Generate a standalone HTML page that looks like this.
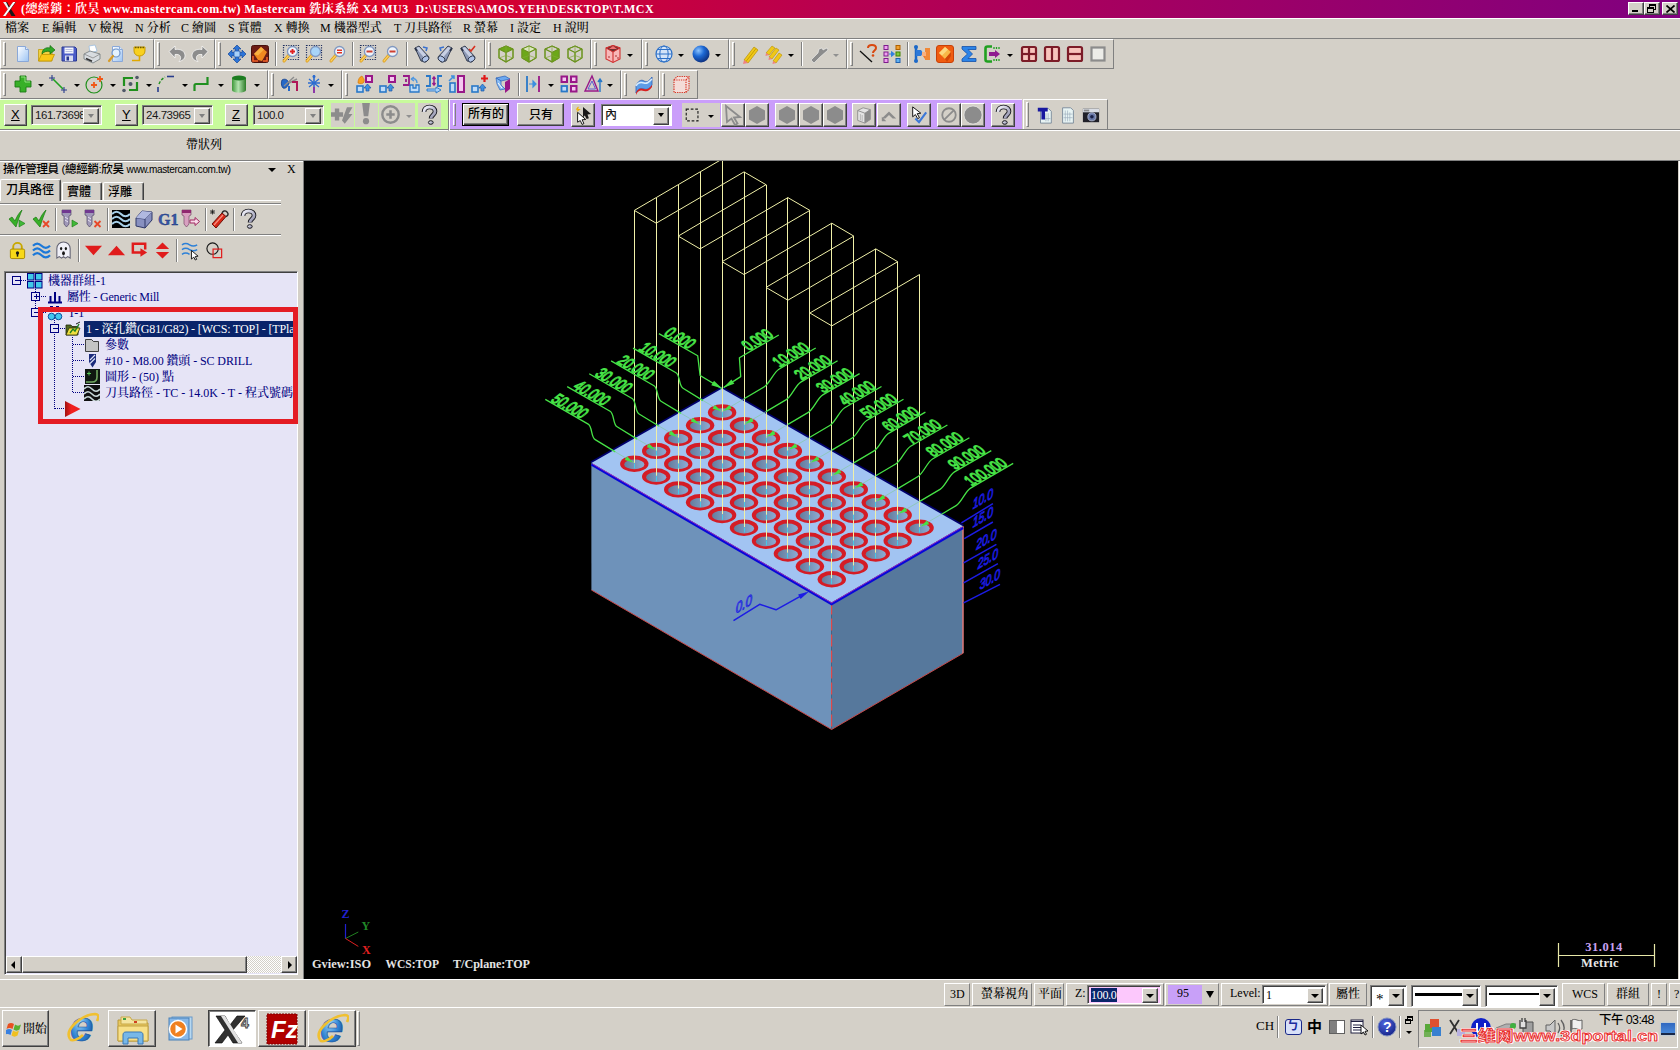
<!DOCTYPE html>
<html lang="zh-Hant">
<head>
<meta charset="utf-8">
<title>Mastercam X4 MU3</title>
<style>
*{box-sizing:border-box;margin:0;padding:0}
html,body{width:1680px;height:1050px;overflow:hidden;background:#d4d0c8}
body{position:relative;font-weight:500;font-family:"Liberation Serif","Noto Serif CJK SC",serif;font-size:12px;color:#000}
.abs{position:absolute}
.t{position:absolute;white-space:nowrap;line-height:1}
.sans{font-family:"Liberation Sans","Noto Sans CJK TC",sans-serif}
#title{left:0;top:0;width:1680px;height:18px;background:linear-gradient(90deg,#fa0006 0%,#e6001c 16%,#b80050 50%,#800080 100%)}
#title .t{color:#fff;font-weight:bold;font-size:12px;top:3px;letter-spacing:.42px}
.cap{position:absolute;top:2px;width:16px;height:13px;background:#d4d0c8;border:1px solid;border-color:#fff #404040 #404040 #fff;box-shadow:inset -1px -1px 0 #808080}
#menu .t{top:22px;font-size:12px}
.grp{position:absolute;border:1px solid;border-color:#fff #808080 #808080 #fff}
.grip{position:absolute;width:3px;border:1px solid;border-color:#fff #808080 #808080 #fff}
.sep{position:absolute;width:2px;border-left:1px solid #808080;border-right:1px solid #fff}
.dd{position:absolute;width:0;height:0;border-left:3px solid transparent;border-right:3px solid transparent;border-top:3px solid #000}
.btn{position:absolute;background:#d4d0c8;border:1px solid;border-color:#fff #404040 #404040 #fff;box-shadow:inset -1px -1px 0 #808080}
.sunk{position:absolute;border:1px solid;border-color:#808080 #fff #fff #808080;box-shadow:inset 1px 1px 0 #404040}
.ic{position:absolute;width:20px;height:20px;overflow:visible}
</style>
</head>
<body>
<div id="title" class="abs">
<svg class="abs" style="left:2px;top:1px" width="15" height="16" viewBox="0 0 15 16"><path d="M1 1h4l2.500 4.500L11 1h3L9 8l4.500 7h-4L7 10.500 3.500 15H1l5-7z" fill="#181818"/><path d="M1 15L11 1h2.500L3.500 15z" fill="#fff"/><path d="M1 1h3l3 6-1 1.500z" fill="#f0f0f0"/></svg>
<span class="t" id="tt" style="left:21px">(總經銷：欣昊 www.mastercam.com.tw) Mastercam 銑床系統 X4 MU3&nbsp; D:\USERS\AMOS.YEH\DESKTOP\T.MCX</span>
<div class="cap" style="left:1628px"><div class="abs" style="left:3px;top:7px;width:6px;height:2px;background:#000"></div></div>
<div class="cap" style="left:1644px"><div class="abs" style="left:4px;top:1px;width:7px;height:6px;border:1px solid #000;border-top-width:2px"></div><div class="abs" style="left:2px;top:4px;width:7px;height:6px;border:1px solid #000;border-top-width:2px;background:#d4d0c8"></div></div>
<div class="cap" style="left:1662px"><svg class="abs" style="left:3px;top:1.5px" width="9" height="8" viewBox="0 0 9 8"><path d="M.5.5l8 7M8.500.5l-8 7" stroke="#000" stroke-width="1.7"/></svg></div>
</div>
<div class="abs" style="left:0;top:18px;width:1680px;height:1px;background:#fff"></div>
<div id="menu">
<span class="t" style="left:5px">檔案</span>
<span class="t" style="left:42px">E 編輯</span>
<span class="t" style="left:88px">V 檢視</span>
<span class="t" style="left:135px">N 分析</span>
<span class="t" style="left:181px">C 繪圖</span>
<span class="t" style="left:228px">S 實體</span>
<span class="t" style="left:274px">X 轉換</span>
<span class="t" style="left:320px">M 機器型式</span>
<span class="t" style="left:394px">T 刀具路徑</span>
<span class="t" style="left:463px">R 螢幕</span>
<span class="t" style="left:510px">I 設定</span>
<span class="t" style="left:553px">H 說明</span>
</div>
<div class="abs" style="left:0;top:38px;width:1680px;height:1px;background:#808080"></div>
<div class="grp" style="left:0px;top:39px;width:154px;height:30px"></div>
<div class="grip" style="left:3px;top:42px;height:24px"></div>
<div class="grp" style="left:154px;top:39px;width:61px;height:30px"></div>
<div class="grip" style="left:157px;top:42px;height:24px"></div>
<div class="grp" style="left:215px;top:39px;width:270px;height:30px"></div>
<div class="grip" style="left:218px;top:42px;height:24px"></div>
<div class="grp" style="left:485px;top:39px;width:106px;height:30px"></div>
<div class="grip" style="left:488px;top:42px;height:24px"></div>
<div class="grp" style="left:591px;top:39px;width:51px;height:30px"></div>
<div class="grip" style="left:594px;top:42px;height:24px"></div>
<div class="grp" style="left:642px;top:39px;width:87px;height:30px"></div>
<div class="grip" style="left:645px;top:42px;height:24px"></div>
<div class="grp" style="left:729px;top:39px;width:118px;height:30px"></div>
<div class="grip" style="left:732px;top:42px;height:24px"></div>
<div class="grp" style="left:847px;top:39px;width:267px;height:30px"></div>
<div class="grip" style="left:850px;top:42px;height:24px"></div>
<svg class="ic" style="left:13px;top:43.5px;width:20px;height:20px" viewBox="0 0 20 20"><defs><linearGradient id="gpage" x1="0" y1="0" x2="1" y2="1"><stop offset="0" stop-color="#fff"/><stop offset="1" stop-color="#9cc4f4"/></linearGradient></defs><path d="M4.500 2.500h8l3 3v12h-11z" fill="url(#gpage)" stroke="#8aa8d8"/><path d="M12.500 2.500v3h3" fill="#dbe9fb" stroke="#8aa8d8"/></svg>
<svg class="ic" style="left:36px;top:43.5px;width:20px;height:20px" viewBox="0 0 20 20"><path d="M2.500 5.500h6l1.500 1.500H16V17H2.500z" fill="#f0d040" stroke="#c09c10" stroke-width=".8"/><path d="M2.500 17l3-6.500h13L15.500 17z" fill="#f8c818" stroke="#c09400" stroke-width=".8"/><path d="M6 10c0-5 4-7 8-6V1.500L19 6l-5 4V7.500c-3-.7-6 0-8 2.500z" fill="#30a828" stroke="#146c10" stroke-width=".7"/></svg>
<svg class="ic" style="left:59px;top:43.5px;width:20px;height:20px" viewBox="0 0 20 20"><path d="M3 3h13l1.500 1.500V17H3z" fill="#4c5cc8" stroke="#283890"/><rect x="5.500" y="3.500" width="9" height="6" fill="#f4f6fc"/><path d="M6.500 5.500h7M6.500 7.500h7" stroke="#a8b0d8" stroke-width=".8"/><rect x="6" y="11.500" width="8" height="5.500" fill="#d8dcf0"/><rect x="7.500" y="12.500" width="2.500" height="4" fill="#283890"/></svg>
<svg class="ic" style="left:82px;top:43.5px;width:20px;height:20px" viewBox="0 0 20 20"><path d="M7 2l6-1 2 6-7 2z" fill="#fff" stroke="#90b8e0" stroke-width=".7"/><path d="M2 10l6-3 10 3v5l-7 4-9-4z" fill="#d8dce0" stroke="#70787c" stroke-width=".8"/><path d="M2 10l9 4 7-4" fill="none" stroke="#888" stroke-width=".8"/><path d="M4 14.500l6 2.700" stroke="#333" stroke-width="1.600"/></svg>
<svg class="ic" style="left:106px;top:43.5px;width:20px;height:20px" viewBox="0 0 20 20"><path d="M6.500 2.500h7l3 3v12h-10z" fill="url(#gpage)" stroke="#8aa8d8"/><path d="M13.500 2.500v3h3" fill="#dbe9fb" stroke="#8aa8d8"/><circle cx="10" cy="9" r="4" fill="#e4f2ff" stroke="#6c94cc" stroke-width="1.200"/><path d="M7 12l-4 5" stroke="#d89c28" stroke-width="2.200" stroke-linecap="round"/></svg>
<svg class="ic" style="left:129px;top:43.5px;width:20px;height:20px" viewBox="0 0 20 20"><path d="M5 3h11v4c0 3-2.500 5-5.500 5S5 10 5 7z" fill="#f8d020" stroke="#c09400" stroke-width=".9"/><path d="M6 3.500h9" stroke="#6c5800" stroke-width="1.400" stroke-dasharray="1.500 1"/><path d="M10.500 12v4.500H3" fill="none" stroke="#e0a800" stroke-width="1.600"/></svg>
<svg class="ic" style="left:167px;top:43.5px;width:20px;height:20px" viewBox="0 0 20 20"><path d="M2 7.500L8 2v3.500c6-1 10 2 10 6 0 3-2 5-6 6 3-3 2-8-4-7V14z" fill="#8c8c8c" stroke="#fff" stroke-width=".7"/></svg>
<svg class="ic" style="left:190px;top:43.5px;width:20px;height:20px" viewBox="0 0 20 20"><path d="M18 7.500L12 2v3.500c-6-1-10 2-10 6 0 3 2 5 6 6-3-3-2-8 4-7V14z" fill="#8c8c8c" stroke="#fff" stroke-width=".7"/></svg>
<svg class="ic" style="left:227px;top:43.5px;width:20px;height:20px" viewBox="0 0 20 20"><path d="M10 1l4 4h-2.500v3.500H15V6l4 4-4 4v-2.500h-3.500V15H14l-4 4-4-4h2.500v-3.500H5V14l-4-4 4-4v2.500h3.500V5H6z" fill="#2c74d8" stroke="#144898" stroke-width=".7"/><rect x="7" y="7" width="6" height="6" fill="#a8d0f8" stroke="#2058b0" stroke-width=".8"/></svg>
<svg class="ic" style="left:250px;top:43.5px;width:20px;height:20px" viewBox="0 0 20 20"><rect x="1.500" y="1.500" width="17" height="17" rx="2" fill="#6c1c14" stroke="#48100c"/><path d="M4 10l7-7 6 5-5 9-4-1z" fill="#f08820"/><path d="M4 10l7-7 3 2.500-6 6z" fill="#f8b040"/><path d="M3 12v5h5M17 13v4h-4" fill="none" stroke="#f06028" stroke-width="1.600"/></svg>
<svg class="ic" style="left:281px;top:43.5px;width:20px;height:20px" viewBox="0 0 20 20"><rect x="2.500" y="1.500" width="15" height="14" fill="none" stroke="#203060" stroke-width="1.200" stroke-dasharray="1.200 1.200"/><path d="M8 11l-5 6" stroke="#e0a020" stroke-width="3" stroke-linecap="round"/><path d="M8 11l-5 6" stroke="#f8d060" stroke-width="1.200" stroke-linecap="round"/><circle cx="11.500" cy="7.500" r="5" fill="#eef4fc" stroke="#8098c0" stroke-width="1.300"/><path d="M9 7.500h5M11.500 5v5" stroke="#e02020" stroke-width="1.800"/></svg>
<svg class="ic" style="left:304px;top:43.5px;width:20px;height:20px" viewBox="0 0 20 20"><rect x="2.500" y="1.500" width="15" height="14" fill="none" stroke="#203060" stroke-width="1.200" stroke-dasharray="1.200 1.200"/><path d="M8 11l-5 6" stroke="#e0a020" stroke-width="3" stroke-linecap="round"/><path d="M8 11l-5 6" stroke="#f8d060" stroke-width="1.200" stroke-linecap="round"/><circle cx="11.500" cy="7.500" r="5" fill="#a8d4f8" stroke="#8098c0" stroke-width="1.300"/></svg>
<svg class="ic" style="left:328px;top:43.5px;width:20px;height:20px" viewBox="0 0 20 20"><path d="M8 11l-5 6" stroke="#e0a020" stroke-width="3" stroke-linecap="round"/><path d="M8 11l-5 6" stroke="#f8d060" stroke-width="1.200" stroke-linecap="round"/><circle cx="11.500" cy="7.500" r="5" fill="#eef4fc" stroke="#8098c0" stroke-width="1.300"/><path d="M9 6.300h5M9 8.800h5" stroke="#e03020" stroke-width="1.500"/></svg>
<svg class="ic" style="left:358px;top:43.5px;width:20px;height:20px" viewBox="0 0 20 20"><rect x="2.500" y="1.500" width="15" height="14" fill="none" stroke="#203060" stroke-width="1.200" stroke-dasharray="1.200 1.200"/><path d="M8 11l-5 6" stroke="#e0a020" stroke-width="3" stroke-linecap="round"/><path d="M8 11l-5 6" stroke="#f8d060" stroke-width="1.200" stroke-linecap="round"/><circle cx="11.500" cy="7.500" r="5" fill="#eef4fc" stroke="#8098c0" stroke-width="1.300"/><path d="M8.500 7.500h6" stroke="#d04030" stroke-width="2"/></svg>
<svg class="ic" style="left:381px;top:43.5px;width:20px;height:20px" viewBox="0 0 20 20"><path d="M8 11l-5 6" stroke="#e0a020" stroke-width="3" stroke-linecap="round"/><path d="M8 11l-5 6" stroke="#f8d060" stroke-width="1.200" stroke-linecap="round"/><circle cx="11.500" cy="7.500" r="5" fill="#eef4fc" stroke="#8098c0" stroke-width="1.300"/><path d="M8.500 7.500h6" stroke="#d04030" stroke-width="2"/></svg>
<svg class="ic" style="left:412px;top:43.5px;width:20px;height:20px" viewBox="0 0 20 20"><g><path d="M3 4l4-2 10 11-3 5-5-1z" fill="#8c98b4" stroke="#2c3448" stroke-width=".9"/><path d="M4 4l3-1 9 10-2 3z" fill="#c8d0e4"/><ellipse cx="13.500" cy="15" rx="3.800" ry="2.600" transform="rotate(-35 13.500 15)" fill="#b0c4e8" stroke="#2c3448" stroke-width=".9"/><path d="M3 4l2 3" stroke="#2c3448" stroke-width="2"/></g><path d="M11 3l4 1-1 3" fill="none" stroke="#3870d0" stroke-width="1.500"/></svg>
<svg class="ic" style="left:435px;top:43.5px;width:20px;height:20px" viewBox="0 0 20 20"><g transform="translate(20 0) scale(-1 1)"><path d="M3 4l4-2 10 11-3 5-5-1z" fill="#8c98b4" stroke="#2c3448" stroke-width=".9"/><path d="M4 4l3-1 9 10-2 3z" fill="#c8d0e4"/><ellipse cx="13.500" cy="15" rx="3.800" ry="2.600" transform="rotate(-35 13.500 15)" fill="#b0c4e8" stroke="#2c3448" stroke-width=".9"/><path d="M3 4l2 3" stroke="#2c3448" stroke-width="2"/></g><path d="M9 3l-4 1 1 3" fill="none" stroke="#3870d0" stroke-width="1.500"/></svg>
<svg class="ic" style="left:458px;top:43.5px;width:20px;height:20px" viewBox="0 0 20 20"><g><path d="M3 4l4-2 10 11-3 5-5-1z" fill="#8c98b4" stroke="#2c3448" stroke-width=".9"/><path d="M4 4l3-1 9 10-2 3z" fill="#c8d0e4"/><ellipse cx="13.500" cy="15" rx="3.800" ry="2.600" transform="rotate(-35 13.500 15)" fill="#b0c4e8" stroke="#2c3448" stroke-width=".9"/><path d="M3 4l2 3" stroke="#2c3448" stroke-width="2"/></g><path d="M11 5l2 2 4-5" fill="none" stroke="#d83020" stroke-width="1.600"/></svg>
<svg class="ic" style="left:496px;top:43.5px;width:20px;height:20px" viewBox="0 0 20 20"><path d="M10 2l7 3v9l-7 4-7-4V5z" fill="none" stroke="#6c9420" stroke-width="1.100"/><path d="M10 2l7 3-7 3.500L3 5z" fill="#6ca818" stroke="#6c9420" stroke-width="1"/><path d="M3 5l7 3.500V18l-7-4z" fill="none" stroke="#6c9420" stroke-width="1"/><path d="M17 5l-7 3.500V18l7-4z" fill="none" stroke="#6c9420" stroke-width="1"/><path d="M10 2v9.500M3 14l7-2.500 7 2.500" fill="none" stroke="#84a83c" stroke-width=".7"/></svg>
<svg class="ic" style="left:519px;top:43.5px;width:20px;height:20px" viewBox="0 0 20 20"><path d="M10 2l7 3v9l-7 4-7-4V5z" fill="none" stroke="#6c9420" stroke-width="1.100"/><path d="M10 2l7 3-7 3.500L3 5z" fill="#dce8c0" stroke="#6c9420" stroke-width="1"/><path d="M3 5l7 3.500V18l-7-4z" fill="#6ca818" stroke="#6c9420" stroke-width="1"/><path d="M17 5l-7 3.500V18l7-4z" fill="none" stroke="#6c9420" stroke-width="1"/><path d="M10 2v9.500M3 14l7-2.500 7 2.500" fill="none" stroke="#84a83c" stroke-width=".7"/></svg>
<svg class="ic" style="left:542px;top:43.5px;width:20px;height:20px" viewBox="0 0 20 20"><path d="M10 2l7 3v9l-7 4-7-4V5z" fill="none" stroke="#6c9420" stroke-width="1.100"/><path d="M10 2l7 3-7 3.500L3 5z" fill="none" stroke="#6c9420" stroke-width="1"/><path d="M3 5l7 3.500V18l-7-4z" fill="none" stroke="#6c9420" stroke-width="1"/><path d="M17 5l-7 3.500V18l7-4z" fill="#6ca818" stroke="#6c9420" stroke-width="1"/><path d="M10 2v9.500M3 14l7-2.500 7 2.500" fill="none" stroke="#84a83c" stroke-width=".7"/></svg>
<svg class="ic" style="left:565px;top:43.5px;width:20px;height:20px" viewBox="0 0 20 20"><path d="M10 2l7 3v9l-7 4-7-4V5z" fill="none" stroke="#6c9420" stroke-width="1.100"/><path d="M10 2l7 3-7 3.500L3 5z" fill="none" stroke="#6c9420" stroke-width="1"/><path d="M3 5l7 3.500V18l-7-4z" fill="none" stroke="#6c9420" stroke-width="1"/><path d="M17 5l-7 3.500V18l7-4z" fill="none" stroke="#6c9420" stroke-width="1"/><path d="M10 2v9.500M3 14l7-2.500 7 2.500" fill="none" stroke="#84a83c" stroke-width=".7"/></svg>
<svg class="ic" style="left:603px;top:43.5px;width:20px;height:20px" viewBox="0 0 20 20"><path d="M3 4l7-2.500L17 4v11l-7 3.500L3 15z" fill="#f8b8b8" stroke="#d03030" stroke-width="1.100"/><path d="M3 4l7-2.500L17 4l-7 4z" fill="#703030" stroke="#d03030"/><path d="M10 2l-4 3h8z" fill="#f07070"/><path d="M10 8v10.500" stroke="#d03030" stroke-width="1.100"/><circle cx="6" cy="13" r=".8" fill="#a02020"/><circle cx="13" cy="12" r=".8" fill="#a02020"/><circle cx="15" cy="14" r=".8" fill="#a02020"/></svg>
<svg class="ic" style="left:654px;top:43.5px;width:20px;height:20px" viewBox="0 0 20 20"><circle cx="10" cy="10" r="8" fill="#d4e4f8" stroke="#2c70c8" stroke-width="1.200"/><ellipse cx="10" cy="10" rx="4.200" ry="8" fill="none" stroke="#2c70c8" stroke-width="1"/><path d="M2 10h16M3.500 5.500h13M3.500 14.500h13" stroke="#2c70c8" stroke-width="1"/></svg>
<svg class="ic" style="left:691px;top:43.5px;width:20px;height:20px" viewBox="0 0 20 20"><defs><radialGradient id="gsph" cx=".35" cy=".3" r=".75"><stop offset="0" stop-color="#8cc4ff"/><stop offset=".45" stop-color="#1c68d4"/><stop offset="1" stop-color="#0c2c78"/></radialGradient></defs><circle cx="10" cy="10" r="8.500" fill="url(#gsph)"/></svg>
<svg class="ic" style="left:741px;top:43.5px;width:20px;height:20px" viewBox="0 0 20 20"><path d="M3 16l10-13 4 3-10 13z" fill="#f0c818" stroke="#b89000" stroke-width=".7"/><path d="M5 17.500l10-13" stroke="#c8a000" stroke-width="1"/><path d="M3 16l4 3-5 1z" fill="#f08080"/></svg>
<svg class="ic" style="left:764px;top:43.5px;width:20px;height:20px" viewBox="0 0 20 20"><g stroke="#b89000" stroke-width=".6"><path d="M2 9l6-7 3 2-6 7z" fill="#f0c818"/><path d="M5 13l7-9 3 2-7 9z" fill="#f0c818"/><path d="M9 17l6-8 3 2-6 8z" fill="#f0c818"/></g><path d="M2 9l3 2-3.500 1zM5 13l3 2-3.500 1zM9 17l3 2-3.500 1z" fill="#f08080"/></svg>
<svg class="ic" style="left:809px;top:43.5px;width:20px;height:20px" viewBox="0 0 20 20"><path d="M2 16l7-7 1-4 3-1 1 2 4-2 1 2-8 7-6 6z" fill="#8c8c8c" stroke="#fff" stroke-width=".5"/></svg>
<svg class="ic" style="left:859px;top:43.5px;width:20px;height:20px" viewBox="0 0 20 20"><path d="M1 7l12 11" stroke="#101010" stroke-width="1.300"/><path d="M9 4c0-2 2-3 4-3s4 1 4 3c0 2.500-3 2.500-3 5" fill="none" stroke="#d84810" stroke-width="2"/><circle cx="14" cy="11.500" r="1.300" fill="#d84810"/></svg>
<svg class="ic" style="left:882px;top:43.5px;width:20px;height:20px" viewBox="0 0 20 20"><g stroke="#7c1c8c" stroke-width="1"><rect x="2" y="1.500" width="4" height="4" fill="#f0a0f0"/><rect x="2" y="8" width="4" height="4" fill="#f0a0f0"/><rect x="2" y="14.500" width="4" height="4" fill="#f0a0f0"/></g><rect x="14" y="1.500" width="4" height="4" fill="#f0a030" stroke="#b06000"/><rect x="14" y="8" width="4" height="4" fill="#80c840" stroke="#408000"/><rect x="14" y="14.500" width="4" height="4" fill="#60b0f0" stroke="#2060b0"/><path d="M7 10h4M9.500 7.500L12.500 10l-3 2.500z" fill="#3080e0" stroke="#3080e0"/></svg>
<svg class="ic" style="left:912px;top:43.5px;width:20px;height:20px" viewBox="0 0 20 20"><path d="M4 2v16" stroke="#1c68c8" stroke-width="2.500"/><circle cx="4" cy="3" r="2" fill="#1c68c8"/><circle cx="4" cy="17" r="2" fill="#1c68c8"/><path d="M4 6h5l2 3-2 3H4z" fill="#2c78d8"/><path d="M17 5v10h-4l-2-3 2-2V5z" fill="#f07828"/><rect x="13" y="4" width="5" height="12" fill="#f08838"/><rect x="10" y="8" width="4" height="4" fill="#f8b080"/></svg>
<svg class="ic" style="left:935px;top:43.5px;width:20px;height:20px" viewBox="0 0 20 20"><rect x="1.500" y="1.500" width="17" height="17" rx="2.500" fill="#f05c10" stroke="#c84008"/><path d="M4 9l6-6 6 5-6 7z" fill="#f8b848"/><path d="M4 9l6-6 3 2.500-6 6z" fill="#fcd880"/><path d="M10 15l6-7v4l-4 6z" fill="#d04808"/></svg>
<svg class="ic" style="left:959px;top:43.5px;width:20px;height:20px" viewBox="0 0 20 20"><path d="M3 2.500h14v3H9l4.500 4.500L9 14.500h8v3H3v-2.500L8.500 10 3 5z" fill="#2c84e8" stroke="#1450a8" stroke-width=".8"/></svg>
<svg class="ic" style="left:983px;top:43.5px;width:20px;height:20px" viewBox="0 0 20 20"><path d="M9 2.500H4.500c-1.500 0-2 .5-2 2v11c0 1.500.5 2 2 2H9" fill="none" stroke="#20a020" stroke-width="2.600"/><path d="M11 3v2M13.500 3v2M16 3v2M11 15v2M13.500 15v2M16 15v2" stroke="#20a020" stroke-width="1.300"/><path d="M6 8h6V6l5 4-5 4v-2H6z" fill="#901c90"/></svg>
<svg class="ic" style="left:1019px;top:43.5px;width:20px;height:20px" viewBox="0 0 20 20"><rect x="3" y="3" width="14" height="14" rx="1.500" fill="#f8c4bc" stroke="#7c1c28" stroke-width="2.200"/><path d="M10 3v14" stroke="#7c1c28" stroke-width="2.200"/><path d="M3 10h14" stroke="#7c1c28" stroke-width="2.200"/></svg>
<svg class="ic" style="left:1042px;top:43.5px;width:20px;height:20px" viewBox="0 0 20 20"><rect x="3" y="3" width="14" height="14" rx="1.500" fill="#f8c4bc" stroke="#7c1c28" stroke-width="2.200"/><path d="M10 3v14" stroke="#7c1c28" stroke-width="2.200"/></svg>
<svg class="ic" style="left:1065px;top:43.5px;width:20px;height:20px" viewBox="0 0 20 20"><rect x="3" y="3" width="14" height="14" rx="1.500" fill="#f8c4bc" stroke="#7c1c28" stroke-width="2.200"/><path d="M3 10h14" stroke="#7c1c28" stroke-width="2.200"/></svg>
<svg class="ic" style="left:1088px;top:43.5px;width:20px;height:20px" viewBox="0 0 20 20"><rect x="3.500" y="3.500" width="13" height="13" fill="#ecece8" stroke="#8c8c8c" stroke-width="2.200"/></svg>
<div class="dd" style="left:627px;top:53.5px;border-top-color:#000"></div>
<div class="dd" style="left:678px;top:53.5px;border-top-color:#000"></div>
<div class="dd" style="left:715px;top:53.5px;border-top-color:#000"></div>
<div class="dd" style="left:788px;top:53.5px;border-top-color:#000"></div>
<div class="dd" style="left:1007px;top:53.5px;border-top-color:#000"></div>
<div class="dd" style="left:833px;top:53.5px;border-top-color:#909090"></div>
<div class="sep" style="left:275px;top:42px;height:24px"></div>
<div class="sep" style="left:352px;top:42px;height:24px"></div>
<div class="sep" style="left:406px;top:42px;height:24px"></div>
<div class="sep" style="left:801px;top:42px;height:24px"></div>
<div class="sep" style="left:907px;top:42px;height:24px"></div>
<div class="grp" style="left:0px;top:70px;width:268px;height:29px"></div>
<div class="grip" style="left:3px;top:73px;height:23px"></div>
<div class="grp" style="left:268px;top:70px;width:74px;height:29px"></div>
<div class="grip" style="left:271px;top:73px;height:23px"></div>
<div class="grp" style="left:342px;top:70px;width:279px;height:29px"></div>
<div class="grip" style="left:345px;top:73px;height:23px"></div>
<div class="grp" style="left:621px;top:70px;width:38px;height:29px"></div>
<div class="grip" style="left:624px;top:73px;height:23px"></div>
<div class="grp" style="left:659px;top:70px;width:39px;height:29px"></div>
<div class="grip" style="left:662px;top:73px;height:23px"></div>
<svg class="ic" style="left:13px;top:74px;width:20px;height:20px" viewBox="0 0 20 20"><path d="M7 2h6v5h5v6h-5v5H7v-5H2V7h5z" fill="#38b028" stroke="#1c7c14" stroke-width=".9"/><path d="M8 3h4v5h5" fill="none" stroke="#90e080" stroke-width="1"/></svg>
<svg class="ic" style="left:48px;top:74px;width:20px;height:20px" viewBox="0 0 20 20"><path d="M5 5l10 10" stroke="#20a020" stroke-width="1.600"/><path d="M1 4h6M4 1v6M13 16h6M16 13v6" stroke="#283c8c" stroke-width="1.100"/></svg>
<svg class="ic" style="left:85px;top:74px;width:20px;height:20px" viewBox="0 0 20 20"><circle cx="9" cy="11" r="8" fill="none" stroke="#20901c" stroke-width="1.200"/><path d="M6 11h6M9 8v6M12 5h6M15 2v6" stroke="#f05818" stroke-width="1.800"/></svg>
<svg class="ic" style="left:121px;top:74px;width:20px;height:20px" viewBox="0 0 20 20"><path d="M3 12V4h9M16 8v8H8" fill="none" stroke="#20901c" stroke-width="2.200"/><circle cx="9.500" cy="10" r="2" fill="#505868"/><circle cx="16" cy="3.500" r="1.800" fill="#505868"/><circle cx="3" cy="16.500" r="1.800" fill="#505868"/></svg>
<svg class="ic" style="left:156px;top:74px;width:20px;height:20px" viewBox="0 0 20 20"><path d="M2 18v-5" stroke="#283c8c" stroke-width="1.600"/><path d="M3 10c1-3 3-5 6-7" fill="none" stroke="#20901c" stroke-width="1.400" stroke-dasharray="3 1.500"/><path d="M11 2.500h7" stroke="#283c8c" stroke-width="1.600"/></svg>
<svg class="ic" style="left:192px;top:74px;width:20px;height:20px" viewBox="0 0 20 20"><path d="M2.500 17V11.500c0-1 .5-1.500 1.500-1.500h11.500V3" fill="none" stroke="#209020" stroke-width="2.200"/></svg>
<svg class="ic" style="left:229px;top:74px;width:20px;height:20px" viewBox="0 0 20 20"><defs><linearGradient id="gcy" x1="0" x2="1"><stop offset="0" stop-color="#3c9838"/><stop offset=".45" stop-color="#b4e4b0"/><stop offset="1" stop-color="#2c7c28"/></linearGradient></defs><path d="M3 4v12c0 3.500 14 3.500 14 0V4z" fill="url(#gcy)"/><ellipse cx="10" cy="4" rx="7" ry="2.600" fill="#1c7c20"/></svg>
<svg class="ic" style="left:280px;top:74px;width:20px;height:20px" viewBox="0 0 20 20"><path d="M2 6c3-2 6 0 7 3-1 4-4 6-6 5C1 12 1 8 2 6z" fill="#2468c8" stroke="#103c88" stroke-width=".8"/><path d="M4 12l10-9M9 9l8-4" stroke="#8c8c8c" stroke-width="1.400"/><path d="M12 8h5v9" fill="none" stroke="#b01858" stroke-width="2"/><path d="M9 12v5" stroke="#2468c8" stroke-width="2"/></svg>
<svg class="ic" style="left:304px;top:74px;width:20px;height:20px" viewBox="0 0 20 20"><path d="M10 1v18" stroke="#2c6cd0" stroke-width="1.600"/><path d="M5 5l10 8M15 5L5 13M4 9h12" stroke="#2c6cd0" stroke-width="1.300"/><path d="M10 13v6" stroke="#8c38a8" stroke-width="2"/><circle cx="10" cy="2.500" r="1.500" fill="#2c6cd0"/></svg>
<svg class="ic" style="left:355px;top:74px;width:20px;height:20px" viewBox="0 0 20 20"><rect x="11" y="2" width="6" height="6" fill="#f4c8f0" stroke="#981888" stroke-width="2"/><rect x="2" y="12" width="6" height="6" fill="#c0dcf8" stroke="#2878c8" stroke-width="1.6"/><path d="M11 17v-3h-2l3.500-4 3.500 4h-2v3z" fill="#3c90e0" stroke="#1c58a8" stroke-width=".7"/><path d="M3 9c0-3 1-6 4-7 1 2 3 3 2 6-1 2-4 2-6 1z" fill="#f8a020" stroke="#d07000" stroke-width=".6"/></svg>
<svg class="ic" style="left:378px;top:74px;width:20px;height:20px" viewBox="0 0 20 20"><rect x="11" y="2" width="6" height="6" fill="#f4c8f0" stroke="#981888" stroke-width="2"/><rect x="2" y="12" width="6" height="6" fill="#c0dcf8" stroke="#2878c8" stroke-width="1.6"/><path d="M11 17v-3h-2l3.500-4 3.500 4h-2v3z" fill="#3c90e0" stroke="#1c58a8" stroke-width=".7"/></svg>
<svg class="ic" style="left:401px;top:74px;width:20px;height:20px" viewBox="0 0 20 20"><path d="M2 2h6v9H2M5 5v3" fill="none" stroke="#981888" stroke-width="1.800"/><path d="M9 11v7h9v-7h-3v3h-3v-3z" fill="#c0dcf8" stroke="#2878c8" stroke-width="1.300"/><path d="M10 5c3-1 6 0 6 4M10 5l3-2M10 5l3 2" fill="none" stroke="#5098e0" stroke-width="1.500"/></svg>
<svg class="ic" style="left:424px;top:74px;width:20px;height:20px" viewBox="0 0 20 20"><path d="M2 2h4v10H2M18 2h-4v10h4" fill="none" stroke="#2878c8" stroke-width="1.800"/><path d="M10 3v8M8.500 5L10 3l1.500 2M8.500 9L10 11l1.500-2" fill="none" stroke="#981888" stroke-width="1.400"/><path d="M3 15h9v-2l5 3-5 3v-2H3z" fill="#a8d0f8" stroke="#2878c8" stroke-width=".9"/></svg>
<svg class="ic" style="left:447px;top:74px;width:20px;height:20px" viewBox="0 0 20 20"><rect x="3" y="9" width="5" height="9" fill="#c0dcf8" stroke="#2878c8" stroke-width="1.6"/><rect x="11" y="2" width="6" height="16" fill="#f4c8f0" stroke="#981888" stroke-width="2"/><path d="M2 7l5-5M4 2h3v3" fill="none" stroke="#3c90e0" stroke-width="1.500"/></svg>
<svg class="ic" style="left:470px;top:74px;width:20px;height:20px" viewBox="0 0 20 20"><rect x="2" y="12" width="6" height="6" fill="#c0dcf8" stroke="#2878c8" stroke-width="1.6"/><path d="M11 17v-3h-2l3.500-4 3.500 4h-2v3z" fill="#3c90e0" stroke="#1c58a8" stroke-width=".7"/><path d="M11 4.500h7M14.500 1v7" stroke="#e01818" stroke-width="2.200"/></svg>
<svg class="ic" style="left:493px;top:74px;width:20px;height:20px" viewBox="0 0 20 20"><path d="M3 4l9-2 5 3-9 2z" fill="#6ca8f0" stroke="#2860b8" stroke-width=".7"/><path d="M12 8l5-3v10l-5 4z" fill="#981888"/><path d="M3 4l5 3v4l4 4-5 1-3-6z" fill="#88bcf4" stroke="#2860b8" stroke-width=".7"/><path d="M5 9l4 5" stroke="#fff" stroke-width="1"/></svg>
<svg class="ic" style="left:524px;top:74px;width:20px;height:20px" viewBox="0 0 20 20"><path d="M3 2v16" stroke="#2878c8" stroke-width="1.800"/><path d="M15 2v16" stroke="#981888" stroke-width="1.800"/><path d="M5 10h6M9 7l3 3-3 3z" fill="#3c90e0" stroke="#3c90e0" stroke-width="1.200"/></svg>
<svg class="ic" style="left:559px;top:74px;width:20px;height:20px" viewBox="0 0 20 20"><rect x="2.5" y="2.5" width="5.5" height="5.5" fill="#f4c8f0" stroke="#981888" stroke-width="2"/><rect x="12" y="2.5" width="5.5" height="5.5" fill="#f4c8f0" stroke="#981888" stroke-width="2"/><rect x="2.5" y="12" width="5.5" height="5.5" fill="#c0dcf8" stroke="#2878c8" stroke-width="1.8"/><rect x="12" y="12" width="5.5" height="5.5" fill="#f4c8f0" stroke="#981888" stroke-width="2"/></svg>
<svg class="ic" style="left:583px;top:74px;width:20px;height:20px" viewBox="0 0 20 20"><path d="M2 17L9 2l6 15z" fill="none" stroke="#981888" stroke-width="1.400"/><path d="M5 15l4-8 3.500 8z" fill="none" stroke="#5c5cd0" stroke-width="1" /><path d="M17 18V6M15 8l2-3 2 3" fill="#3c90e0" stroke="#2878c8" stroke-width="1.400"/></svg>
<svg class="ic" style="left:634px;top:74px;width:20px;height:20px" viewBox="0 0 20 20"><path d="M2 12c2-5 5-7 8-5s5 0 8-4v8c-3 4-5 5-8 4s-6-1-8 4z" fill="#5c9ce8" stroke="#2c60b8" stroke-width=".8"/><path d="M2 12c2-4 5-4 8-3s5-1 8-4" fill="none" stroke="#d8ecff" stroke-width="1.500"/><path d="M2 19c2-5 5-5 8-4s5 0 8-4v2c-3 4-5 5-8 4s-6-1-8 4z" fill="#d82020"/></svg>
<svg class="ic" style="left:671px;top:74px;width:20px;height:20px" viewBox="0 0 20 20"><path d="M3 6l3-3.500h12V15l-3 3.500H3z M3 6h12v12.500M15 6l3-3.500" fill="#f4dcd8" stroke="#d83828" stroke-width="1.200" stroke-dasharray="1.300 1"/></svg>
<div class="dd" style="left:38px;top:84px;border-top-color:#000"></div>
<div class="dd" style="left:74px;top:84px;border-top-color:#000"></div>
<div class="dd" style="left:110px;top:84px;border-top-color:#000"></div>
<div class="dd" style="left:146px;top:84px;border-top-color:#000"></div>
<div class="dd" style="left:182px;top:84px;border-top-color:#000"></div>
<div class="dd" style="left:218px;top:84px;border-top-color:#000"></div>
<div class="dd" style="left:254px;top:84px;border-top-color:#000"></div>
<div class="dd" style="left:328px;top:84px;border-top-color:#000"></div>
<div class="dd" style="left:548px;top:84px;border-top-color:#000"></div>
<div class="dd" style="left:607px;top:84px;border-top-color:#000"></div>
<div class="sep" style="left:518px;top:73px;height:23px"></div>
<div class="abs" style="left:0;top:99px;width:449px;height:32px;background:#c8fa9c;border-top:1px solid #f4fff0;border-bottom:1px solid #fff;border-right:1px solid #808080;box-shadow:inset 0 -1px 0 #808080"></div>
<div class="abs" style="left:449px;top:99px;width:573px;height:32px;background:#ca9efa;border-top:1px solid #f8f0ff;border-bottom:1px solid #fff;border-left:1px solid #fff;box-shadow:inset 0 -1px 0 #808080"></div>
<div class="grip" style="left:453px;top:103px;height:23px"></div>
<div class="btn" style="left:4px;top:104px;width:23px;height:22px;"><span class="t sans" style="left:6px;top:3px;font-size:13px;text-decoration:underline">X</span></div>
<div class="btn" style="left:115px;top:104px;width:23px;height:22px;"><span class="t sans" style="left:6px;top:3px;font-size:13px;text-decoration:underline">Y</span></div>
<div class="btn" style="left:225px;top:104px;width:23px;height:22px;"><span class="t sans" style="left:6px;top:3px;font-size:13px;text-decoration:underline">Z</span></div>
<div class="sunk" style="left:31px;top:105px;width:71px;height:20px;background:#d4d0c8"><span class="t sans" style="left:3px;top:4px;font-size:11.5px;letter-spacing:-.45px;color:#181818">161.73698</span><div class="btn" style="right:2px;top:2px;width:16px;height:16px"><div class="dd" style="left:4px;top:5px;border-top-color:#808080;border-width:4px 4px 0 4px;border-left-width:3.5px;border-right-width:3.5px"></div></div></div>
<div class="sunk" style="left:142px;top:105px;width:71px;height:20px;background:#d4d0c8"><span class="t sans" style="left:3px;top:4px;font-size:11.5px;letter-spacing:-.45px;color:#181818">24.73965</span><div class="btn" style="right:2px;top:2px;width:16px;height:16px"><div class="dd" style="left:4px;top:5px;border-top-color:#808080;border-width:4px 4px 0 4px;border-left-width:3.5px;border-right-width:3.5px"></div></div></div>
<div class="sunk" style="left:253px;top:105px;width:71px;height:20px;background:#d4d0c8"><span class="t sans" style="left:3px;top:4px;font-size:11.5px;letter-spacing:-.45px;color:#181818">100.0</span><div class="btn" style="right:2px;top:2px;width:16px;height:16px"><div class="dd" style="left:4px;top:5px;border-top-color:#808080;border-width:4px 4px 0 4px;border-left-width:3.5px;border-right-width:3.5px"></div></div></div>
<div class="abs" style="left:331px;top:103px;width:23px;height:24px;background:#d4d0c8"></div>
<div class="abs" style="left:355px;top:103px;width:23px;height:24px;background:#d4d0c8"></div>
<div class="abs" style="left:379px;top:103px;width:36px;height:24px;background:#d4d0c8"></div>
<div class="abs" style="left:418px;top:103px;width:23px;height:24px;background:#d4d0c8"></div>
<svg class="ic" style="left:331px;top:103.5px;width:22px;height:22px" viewBox="0 0 20 20"><path d="M0 7.500h3.500V4h4v3.500H11v4H7.500V15h-4v-3.500H0z" fill="#8c8c8c"/><path d="M10 15l4.500-12h5l-3.500 6h3.500l-7 9z" fill="#8c8c8c"/></svg>
<svg class="ic" style="left:355px;top:102.5px;width:22px;height:22px" viewBox="0 0 20 20"><path d="M6.500 0h7l-1.500 12h-4z" fill="#8c8c8c"/><circle cx="10" cy="16.500" r="2.800" fill="#8c8c8c"/></svg>
<svg class="ic" style="left:379.5px;top:104px;width:21px;height:21px" viewBox="0 0 20 20"><circle cx="10" cy="10" r="7.800" fill="none" stroke="#8c8c8c" stroke-width="2.300"/><path d="M6 10h8M10 6v8" stroke="#8c8c8c" stroke-width="2.400"/></svg>
<div class="dd" style="left:406px;top:114.5px;border-top-color:#909090"></div>
<svg class="ic" style="left:419px;top:104.5px;width:20px;height:20px" viewBox="0 0 20 20"><defs><linearGradient id="gq" x1="0" y1="0" x2="1" y2="1"><stop offset="0" stop-color="#f4f4fc"/><stop offset="1" stop-color="#8c8ca8"/></linearGradient></defs><path d="M5 7c0-3 2-5 5.500-5S16 4 16 6.500c0 3.500-4 3.500-4 7" fill="none" stroke="#181820" stroke-width="4.600"/><path d="M5 7c0-3 2-5 5.500-5S16 4 16 6.500c0 3.500-4 3.500-4 7" fill="none" stroke="url(#gq)" stroke-width="2.800"/><ellipse cx="11.800" cy="17.500" rx="2.400" ry="1.800" fill="url(#gq)" stroke="#181820" stroke-width="1"/></svg>
<div class="btn" style="left:462px;top:103px;width:47px;height:23px;border-color:#000;box-shadow:inset 1px 1px 0 #fff,inset -1px -1px 0 #404040,inset -2px -2px 0 #808080"><span class="t sans" style="left:5px;top:4px;font-size:12px">所有的</span></div>
<div class="btn" style="left:517px;top:103px;width:47px;height:23px;"><span class="t sans" style="left:11px;top:5px;font-size:12px">只有</span></div>
<div class="btn" style="left:571px;top:103px;width:24px;height:24px;"></div>
<svg class="ic" style="left:573.5px;top:105.5px;width:18px;height:18px" viewBox="0 0 20 20"><path d="M10 1l9 8-4 .500 1.500 4-2.500 1-2-4-2 2z" fill="#181818"/><path d="M4 7l9 8-4 .300 2 4.200-2 1-2-4.300L4 18z" fill="#fff" stroke="#000" stroke-width="1"/><path d="M5 1L3 3.500l3 .500-3 2" fill="none" stroke="#f0b000" stroke-width="1.200"/></svg>
<div class="sunk" style="left:601px;top:104px;width:71px;height:22px;background:#fff"><span class="t sans" style="left:3px;top:4px;font-size:12px;letter-spacing:-.45px;color:#181818">內</span><div class="btn" style="right:2px;top:2px;width:16px;height:18px"><div class="dd" style="left:4px;top:5px;border-top-color:#000;border-width:4px 4px 0 4px;border-left-width:3.5px;border-right-width:3.5px"></div></div></div>
<div class="abs" style="left:682px;top:103px;width:38px;height:24px;background:#d4d0c8"></div>
<svg class="ic" style="left:684px;top:105.5px;width:18px;height:18px" viewBox="0 0 20 20"><rect x="2.500" y="3.500" width="13" height="13" fill="none" stroke="#202020" stroke-width="1.300" stroke-dasharray="3 2"/></svg>
<div class="dd" style="left:708px;top:114.5px;border-top-color:#000"></div>
<div class="btn" style="left:721px;top:103px;width:24px;height:24px;"></div>
<svg class="ic" style="left:722.5px;top:104.5px;width:20px;height:20px" viewBox="0 0 20 20"><path d="M3 1l14 11-6 .500 3.500 6-2.500 1.500-3.500-6.500L4 17z" fill="#d4d0c8" stroke="#8c8c8c" stroke-width="1.800"/></svg>
<div class="btn" style="left:745px;top:103px;width:24px;height:24px;"></div>
<svg class="ic" style="left:746.5px;top:104.5px;width:20px;height:20px" viewBox="0 0 20 20"><path d="M10 1l8 4.500v9L10 19l-8-4.500v-9z" fill="#8c8c8c"/></svg>
<div class="btn" style="left:775px;top:103px;width:24px;height:24px;"></div>
<svg class="ic" style="left:776.5px;top:104.5px;width:20px;height:20px" viewBox="0 0 20 20"><path d="M10 1l8 4.500v9L10 19l-8-4.500v-9z" fill="#8c8c8c"/></svg>
<div class="btn" style="left:799px;top:103px;width:24px;height:24px;"></div>
<svg class="ic" style="left:800.5px;top:104.5px;width:20px;height:20px" viewBox="0 0 20 20"><path d="M10 1l8 4.500v9L10 19l-8-4.500v-9z" fill="#8c8c8c"/></svg>
<div class="btn" style="left:823px;top:103px;width:24px;height:24px;"></div>
<svg class="ic" style="left:824.5px;top:104.5px;width:20px;height:20px" viewBox="0 0 20 20"><path d="M10 1l8 4.500v9L10 19l-8-4.500v-9z" fill="#8c8c8c"/></svg>
<div class="btn" style="left:852px;top:103px;width:24px;height:24px;"></div>
<svg class="ic" style="left:854.5px;top:105.5px;width:18px;height:18px" viewBox="0 0 20 20"><path d="M3 5l6-3 8 2v11l-6 4-8-3z" fill="#e4e4e4" stroke="#8c8c8c" stroke-width="1"/><path d="M11 8v11l6-4V4z" fill="#8c8c8c"/><path d="M3 5l8 3 6-4M11 8v11" fill="none" stroke="#8c8c8c"/><path d="M6 9v7M8 10v7" stroke="#a8a8a8" stroke-width=".8"/></svg>
<div class="btn" style="left:877px;top:103px;width:24px;height:24px;"></div>
<svg class="ic" style="left:879.5px;top:105.5px;width:18px;height:18px" viewBox="0 0 20 20"><path d="M2 14l8-8 8 8h-4l-4-4-4 4z" fill="#8c8c8c"/><path d="M2 12v5h5" fill="#8c8c8c"/></svg>
<div class="btn" style="left:907px;top:103px;width:24px;height:24px;"></div>
<svg class="ic" style="left:909.5px;top:105.5px;width:18px;height:18px" viewBox="0 0 20 20"><path d="M3 1l9 7-4 .500 2.500 4.500-2 1L6 9.500 3 12z" fill="#fff" stroke="#000" stroke-width="1"/><path d="M6 14l4 4 8-11" fill="none" stroke="#3c78d8" stroke-width="2.400"/></svg>
<div class="btn" style="left:937px;top:103px;width:24px;height:24px;"></div>
<svg class="ic" style="left:939.5px;top:105.5px;width:18px;height:18px" viewBox="0 0 20 20"><circle cx="10" cy="10" r="7.500" fill="none" stroke="#8c8c8c" stroke-width="2"/><path d="M4.500 15.500l11-11" stroke="#8c8c8c" stroke-width="2"/></svg>
<div class="btn" style="left:961px;top:103px;width:24px;height:24px;"></div>
<svg class="ic" style="left:962.5px;top:104.5px;width:20px;height:20px" viewBox="0 0 20 20"><circle cx="10" cy="10" r="9" fill="#8c8c8c" stroke="#f0f0f0" stroke-width=".6"/></svg>
<div class="btn" style="left:991px;top:103px;width:24px;height:24px;"></div>
<svg class="ic" style="left:992.5px;top:104.5px;width:20px;height:20px" viewBox="0 0 20 20"><defs><linearGradient id="gq" x1="0" y1="0" x2="1" y2="1"><stop offset="0" stop-color="#f4f4fc"/><stop offset="1" stop-color="#8c8ca8"/></linearGradient></defs><path d="M5 7c0-3 2-5 5.500-5S16 4 16 6.500c0 3.500-4 3.500-4 7" fill="none" stroke="#181820" stroke-width="4.600"/><path d="M5 7c0-3 2-5 5.500-5S16 4 16 6.500c0 3.500-4 3.500-4 7" fill="none" stroke="url(#gq)" stroke-width="2.800"/><ellipse cx="11.800" cy="17.500" rx="2.400" ry="1.800" fill="url(#gq)" stroke="#181820" stroke-width="1"/></svg>
<div class="grp" style="left:1023px;top:99px;width:85px;height:31px"></div>
<div class="grip" style="left:1026px;top:102px;height:25px"></div>
<div class="abs" style="left:1022px;top:129px;width:658px;height:2px;border-top:1px solid #808080;border-bottom:1px solid #fff"></div>
<svg class="ic" style="left:1036px;top:105.5px;width:18px;height:18px" viewBox="0 0 20 20"><path d="M5 3h9l3 3v13H5z" fill="#e8f4f4" stroke="#789"/><path d="M11 8v9M13.500 8v9M9 14h7" stroke="#9ab" stroke-width=".8"/><path d="M2 2h11v4h-3v9H6V6H2z" fill="#1818a0"/></svg>
<svg class="ic" style="left:1059px;top:105.5px;width:18px;height:18px" viewBox="0 0 20 20"><path d="M4 2h9l3 3v14H4z" fill="#e8f4f4" stroke="#789"/><path d="M7 5v12M9.500 5v12M12 7v10M5 9h10M5 13h10" stroke="#9ab" stroke-width=".7"/></svg>
<svg class="ic" style="left:1082px;top:105.5px;width:18px;height:18px" viewBox="0 0 20 20"><rect x="1" y="3" width="18" height="15" fill="#202028"/><rect x="1" y="3" width="18" height="4" fill="#d8dce4"/><rect x="2" y="4" width="6" height="2" fill="#888"/><circle cx="11" cy="12" r="4.500" fill="#6878a8" stroke="#b0b8d0" stroke-width="1"/><circle cx="11" cy="12" r="2" fill="#182048"/></svg>
<span class="t" style="left:186px;top:139px;font-size:12px">帶狀列</span>
<div class="abs" style="left:0;top:160px;width:1680px;height:1px;background:#808080"></div>
<div class="abs" style="left:0;top:161px;width:304px;height:818px;background:#d4d0c8"></div>
<div class="abs" style="left:0;top:161px;width:303px;height:1px;background:#fff"></div>
<div class="abs" style="left:303px;top:161px;width:1px;height:818px;background:#808080"></div>
<span class="t sans" id="ph" style="left:3px;top:164px;font-size:11.5px;letter-spacing:-.35px">操作管理員 (總經銷:欣昊 <span style="font-size:10px">www.mastercam.com.tw</span>)</span>
<div class="dd" style="left:268px;top:168px;border-width:4px 4px 0 4px"></div>
<span class="t" style="left:287px;top:163px;font-size:12px">X</span>
<div class="abs" style="left:0;top:200px;width:281px;height:1px;background:#fff"></div>
<div class="abs" style="left:62px;top:182px;width:40px;height:18px;background:#d4d0c8;border:1px solid;border-color:#fff #404040 #d4d0c8 #fff;border-bottom:0;box-shadow:inset -1px 0 0 #808080;border-radius:2px 2px 0 0"><span class="t sans" style="left:4px;top:3px;font-size:12px">實體</span></div>
<div class="abs" style="left:103px;top:182px;width:41px;height:18px;background:#d4d0c8;border:1px solid;border-color:#fff #404040 #d4d0c8 #fff;border-bottom:0;box-shadow:inset -1px 0 0 #808080;border-radius:2px 2px 0 0"><span class="t sans" style="left:4px;top:3px;font-size:12px">浮雕</span></div>
<div class="abs" style="left:0px;top:179px;width:61px;height:22px;background:#d4d0c8;border:1px solid;border-color:#fff #404040 #d4d0c8 #fff;border-bottom:0;box-shadow:inset -1px 0 0 #808080;border-radius:2px 2px 0 0"><span class="t sans" style="left:5px;top:4px;font-size:12px">刀具路徑</span></div>
<div class="abs" style="left:0;top:203px;width:281px;height:2px;border-top:1px solid #808080;border-bottom:1px solid #fff"></div>
<div class="abs" style="left:0;top:234px;width:281px;height:2px;border-top:1px solid #808080;border-bottom:1px solid #fff"></div>
<svg class="ic" style="left:7px;top:209px;width:20px;height:20px" viewBox="0 0 20 20"><path d="M2 10l3-2 3 4c2-5 4-8 7-11-2 5-4 10-6 17z" fill="#38b028" stroke="#187810" stroke-width=".7"/><path d="M12 11l6 3.500-6 3.500z" fill="#40b838" stroke="#187810" stroke-width=".6"/></svg>
<svg class="ic" style="left:31px;top:209px;width:20px;height:20px" viewBox="0 0 20 20"><path d="M2 10l3-2 3 4c2-5 4-8 7-11-2 5-4 10-6 17z" fill="#38b028" stroke="#187810" stroke-width=".7"/><path d="M12 12l6 6M18 12l-6 6" stroke="#e84828" stroke-width="1.800"/></svg>
<svg class="ic" style="left:59px;top:209px;width:20px;height:20px" viewBox="0 0 20 20"><path d="M3 1h9v5l-2 1v8l-2.500 3L5 15V7L3 6z" fill="#a098b8" stroke="#504868" stroke-width=".7"/><rect x="3" y="1" width="9" height="3" fill="#703890"/><path d="M6 8l3 2M6 11l3 2" stroke="#e8e4f4" stroke-width="1"/><path d="M13 11l6 3.500-6 3.500z" fill="#40b838" stroke="#187810" stroke-width=".6"/></svg>
<svg class="ic" style="left:82px;top:209px;width:20px;height:20px" viewBox="0 0 20 20"><path d="M3 1h9v5l-2 1v8l-2.500 3L5 15V7L3 6z" fill="#a098b8" stroke="#504868" stroke-width=".7"/><rect x="3" y="1" width="9" height="3" fill="#703890"/><path d="M6 8l3 2M6 11l3 2" stroke="#e8e4f4" stroke-width="1"/><path d="M12.500 12l6 6M18.500 12l-6 6" stroke="#e84828" stroke-width="1.800"/></svg>
<svg class="ic" style="left:111px;top:209px;width:20px;height:20px" viewBox="0 0 20 20"><rect x="1" y="1" width="18" height="18" fill="#000"/><path d="M1 5c3-3 6-3 9 0s6 3 9 0M1 10c3-3 6-3 9 0s6 3 9 0M1 15c3-3 6-3 9 0s6 3 9 0" fill="none" stroke="#a8d0e8" stroke-width="2"/></svg>
<svg class="ic" style="left:134px;top:209px;width:20px;height:20px" viewBox="0 0 20 20"><path d="M2 9l6-7 10 1v8l-7 8-9-2z" fill="#8890c0" stroke="#303868" stroke-width="1"/><path d="M2 9l9 1 7-7" fill="none" stroke="#303868" stroke-width="1"/><path d="M11 10v9" stroke="#303868"/><path d="M2 9l6-7 10 1-7 7z" fill="#b0b8e0"/></svg>
<svg class="ic" style="left:158px;top:209px;width:20px;height:20px" viewBox="0 0 20 20"><text x="0" y="16" font-family="Liberation Serif,serif" font-weight="bold" font-size="16" fill="#3858a8" stroke="#1c3478" stroke-width=".4">G1</text></svg>
<svg class="ic" style="left:180px;top:209px;width:20px;height:20px" viewBox="0 0 20 20"><path d="M2 1h9v5L9 7v8l-2.500 3L4 15V7L2 6z" fill="#d8a0c0" stroke="#784868" stroke-width=".7"/><rect x="2" y="1" width="9" height="3" fill="#902870"/><path d="M10 11h5V8.500l4.500 4-4.500 4V14h-5z" fill="#f8d8e8" stroke="#a02860" stroke-width="1"/></svg>
<svg class="ic" style="left:209px;top:209px;width:20px;height:20px" viewBox="0 0 20 20"><path d="M3 15L13 4l4 3.500L7 19z" fill="#d82818" stroke="#701008" stroke-width="1"/><path d="M13 4c1-2 3-3 5-1s1 4-1 4.500" fill="none" stroke="#282828" stroke-width="1.400"/><path d="M5 16l9-10" stroke="#f89080" stroke-width="1.200"/><path d="M1 3h5M3.500.5v5M1.500 1l4 4M5.500 1l-4 4" stroke="#181818" stroke-width=".8"/></svg>
<svg class="ic" style="left:238px;top:209px;width:20px;height:20px" viewBox="0 0 20 20"><defs><linearGradient id="gq" x1="0" y1="0" x2="1" y2="1"><stop offset="0" stop-color="#f4f4fc"/><stop offset="1" stop-color="#8c8ca8"/></linearGradient></defs><path d="M5 7c0-3 2-5 5.500-5S16 4 16 6.500c0 3.500-4 3.500-4 7" fill="none" stroke="#181820" stroke-width="4.600"/><path d="M5 7c0-3 2-5 5.500-5S16 4 16 6.500c0 3.500-4 3.500-4 7" fill="none" stroke="url(#gq)" stroke-width="2.800"/><ellipse cx="11.800" cy="17.500" rx="2.400" ry="1.800" fill="url(#gq)" stroke="#181820" stroke-width="1"/></svg>
<div class="sep" style="left:55px;top:208px;height:23px"></div>
<div class="sep" style="left:107px;top:208px;height:23px"></div>
<div class="sep" style="left:205px;top:208px;height:23px"></div>
<div class="sep" style="left:233px;top:208px;height:23px"></div>
<svg class="ic" style="left:7.5px;top:241px;width:19px;height:19px" viewBox="0 0 20 20"><path d="M5.500 9V6c0-2 2-4 4.500-4s4.500 2 4.500 4v3" fill="none" stroke="#c8a800" stroke-width="2"/><rect x="2.500" y="8.500" width="15" height="10" rx="1.500" fill="#f8d818" stroke="#a88800" stroke-width="1"/><circle cx="10" cy="12.500" r="1.700" fill="#181818"/><path d="M10 13v3.500" stroke="#181818" stroke-width="1.600"/></svg>
<svg class="ic" style="left:31.5px;top:241px;width:19px;height:19px" viewBox="0 0 20 20"><path d="M1 5c3-3 6-3 9 0s6 3 9 0M1 10c3-3 6-3 9 0s6 3 9 0M1 15c3-3 6-3 9 0s6 3 9 0" fill="none" stroke="#1c78d8" stroke-width="2.300"/></svg>
<svg class="ic" style="left:53.5px;top:241px;width:19px;height:19px" viewBox="0 0 20 20"><path d="M3 18V8c0-4 3-7 7-7s7 3 7 7v10l-2.500-1.500L12 18l-2-1.500L8 18l-2.500-1.500z" fill="#f0f0f8" stroke="#606070" stroke-width="1.100"/><ellipse cx="7.500" cy="8" rx="1.200" ry="1.800" fill="#181818"/><ellipse cx="12.500" cy="8" rx="1.200" ry="1.800" fill="#181818"/><ellipse cx="10" cy="13" rx="1.500" ry="2.200" fill="#181818"/></svg>
<svg class="ic" style="left:83.5px;top:241px;width:19px;height:19px" viewBox="0 0 20 20"><path d="M1 5h18l-9 10z" fill="#e01c1c"/></svg>
<svg class="ic" style="left:106.5px;top:241px;width:19px;height:19px" viewBox="0 0 20 20"><path d="M1 15h18L10 5z" fill="#e01c1c"/></svg>
<svg class="ic" style="left:129.5px;top:241px;width:19px;height:19px" viewBox="0 0 20 20"><path d="M16 9V3H3v9h9" fill="none" stroke="#e01c1c" stroke-width="2.600"/><path d="M11 7.500l7 4.500-7 4.500z" fill="#e01c1c"/></svg>
<svg class="ic" style="left:152.5px;top:241px;width:19px;height:19px" viewBox="0 0 20 20"><path d="M3 8.500h14L10 1.500zM3 11.500h14l-7 7z" fill="#e01c1c"/></svg>
<svg class="ic" style="left:180.5px;top:241px;width:19px;height:19px" viewBox="0 0 20 20"><path d="M1 4c3-2 5-2 8 0s5 2 8 0M1 9c3-2 5-2 8 0s5 2 8 0M1 14c3-2 5-2 8 0" fill="none" stroke="#2c80d8" stroke-width="1.500"/><path d="M11 10l7 6-3 .300 1.500 3-1.500.700-1.500-3-2.500 2z" fill="#fff" stroke="#000" stroke-width=".9"/></svg>
<svg class="ic" style="left:204.5px;top:241px;width:19px;height:19px" viewBox="0 0 20 20"><circle cx="8" cy="8" r="6" fill="none" stroke="#181818" stroke-width="1.200"/><rect x="8.500" y="8.500" width="9" height="9" fill="none" stroke="#e02020" stroke-width="1.300"/></svg>
<div class="sep" style="left:78px;top:239px;height:23px"></div>
<div class="sep" style="left:176px;top:239px;height:23px"></div>
<div class="abs" style="left:4px;top:271px;width:294px;height:704px;background:#e6e4f6;border:1px solid;border-color:#808080 #fff #fff #808080;box-shadow:inset 1px 1px 0 #404040"></div>
<svg class="abs" style="left:0;top:271px" width="300" height="150" viewBox="0 271 300 150" shape-rendering="crispEdges"><g stroke="#000080" stroke-width="1" stroke-dasharray="1 1" fill="none"><path d="M21 280.500h6M35.500 289v28M41 296.500h6M41 312.500h6M54.500 318v91M60 328.500h5M72.500 337v56M73 344.500h11M73 360.500h11M73 376.500h11M73 392.500h11M55 408.500h10"/></g><g stroke-width="1"><rect x="12.5" y="276.5" width="8" height="8" fill="#e6e4f6" stroke="#000080" stroke-dasharray="none"/><path d="M14.5 280.5h5" stroke="#000080" stroke-dasharray="none"/><rect x="31.5" y="292.5" width="8" height="8" fill="#e6e4f6" stroke="#000080" stroke-dasharray="none"/><path d="M33.5 296.5h5" stroke="#000080" stroke-dasharray="none"/><path d="M36.0 294.0v5" stroke="#000080"/><rect x="31.5" y="308.5" width="8" height="8" fill="#e6e4f6" stroke="#000080" stroke-dasharray="none"/><path d="M33.5 312.5h5" stroke="#000080" stroke-dasharray="none"/><rect x="50.5" y="324.5" width="8" height="8" fill="#e6e4f6" stroke="#000080" stroke-dasharray="none"/><path d="M52.5 328.5h5" stroke="#000080" stroke-dasharray="none"/></g></svg>
<span class="t" id="tr0" style="left:48px;top:275px;font-size:12px;color:#000080;letter-spacing:0px">機器群組-1</span>
<span class="t" id="tr1" style="left:67px;top:291px;font-size:12px;color:#000080;letter-spacing:-0.2px">屬性 - Generic Mill</span>
<span class="t"  style="left:68px;top:307px;font-size:12px;color:#000080;letter-spacing:0px">T-1</span>
<div class="abs" style="left:84px;top:321px;width:209px;height:16px;background:#0a246a;overflow:hidden"><span class="t" id="tr3" style="left:2px;top:2px;font-size:12px;color:#fff;letter-spacing:-.15px">1 - 深孔鑽(G81/G82) - [WCS: TOP] - [TPlane: TOP]</span></div>
<span class="t"  style="left:105px;top:339px;font-size:12px;color:#000080;letter-spacing:0px">參數</span>
<span class="t" id="tr5" style="left:105px;top:355px;font-size:12px;color:#000080;letter-spacing:-0.1px">#10 - M8.00 鑽頭 - SC DRILL</span>
<span class="t" id="tr6" style="left:105px;top:371px;font-size:12px;color:#000080;letter-spacing:0px">圖形 - (50) 點</span>
<div class="abs" style="left:105px;top:385px;width:188px;height:16px;overflow:hidden"><span class="t" id="tr7" style="left:0;top:2px;font-size:12px;color:#000080">刀具路徑 - TC - 14.0K - T - 程式號碼 0</span></div>
<svg class="abs" style="left:27px;top:273px" width="16" height="16" viewBox="0 0 16 16"><g fill="#40c8e8" stroke="#000080" stroke-width="1"><rect x=".5" y=".5" width="6.500" height="6.500"/><rect x="8.500" y=".5" width="6.500" height="6.500"/><rect x=".5" y="8.500" width="6.500" height="6.500"/><rect x="8.500" y="8.500" width="6.500" height="6.500"/></g></svg>
<svg class="abs" style="left:47px;top:289px" width="16" height="16" viewBox="0 0 16 16"><path d="M1 13.500h14M3.500 13V7M8 13V3M12.500 13V7" stroke="#000080" stroke-width="2" fill="none"/></svg>
<svg class="abs" style="left:47px;top:305px" width="16" height="16" viewBox="0 0 16 16"><path d="M3 1.500h3M9 1.500h3M3 6.500h3M9 6.500h3" stroke="#000080" stroke-width="1"/><circle cx="4.500" cy="11.500" r="3.300" fill="#40c8f0" stroke="#0a50a0"/><circle cx="11.500" cy="11.500" r="3.300" fill="#40c8f0" stroke="#0a50a0"/></svg>
<svg class="abs" style="left:65px;top:321px" width="16" height="16" viewBox="0 0 16 16"><path d="M1 4h5l1 1.500h6V14H1z" fill="#506820" stroke="#202808" stroke-width=".8"/><path d="M1 14l3-7h11l-3 7z" fill="#f0e040" stroke="#303008" stroke-width=".8"/><path d="M5 12l3-4 2 2 4-7" fill="none" stroke="#208020" stroke-width="1.400"/><path d="M11 3l4-2" stroke="#202020"/></svg>
<svg class="abs" style="left:84px;top:337px" width="16" height="16" viewBox="0 0 16 16"><path d="M1.500 2.500h6l2 2h5v10h-13z" fill="#c4c4c4" stroke="#404040"/><path d="M9.500 4.500l-2-2" stroke="#404040"/></svg>
<svg class="abs" style="left:84px;top:353px" width="16" height="16" viewBox="0 0 16 16"><path d="M5 1h7v8l-3.500 5.500L5 9z" fill="#1c2c7c"/><path d="M6 7l5-5M6 10.500l5-5" stroke="#e0e4f8" stroke-width="1.100"/></svg>
<svg class="abs" style="left:84px;top:369px" width="16" height="16" viewBox="0 0 16 16"><rect x="1" y="0" width="15" height="15" fill="#101810"/><path d="M13 1v7c0 3-2 5-5 5H2" fill="none" stroke="#70a860" stroke-width="1.600"/><path d="M5 2.500v4M3 4.500h4" stroke="#58c858" stroke-width="1"/></svg>
<svg class="abs" style="left:84px;top:385px" width="16" height="16" viewBox="0 0 16 16"><rect x="0" y="0" width="16" height="16" fill="#101010"/><path d="M0 4c3-3 5-3 8 0s5 3 8 0M0 9c3-3 5-3 8 0s5 3 8 0M0 14c3-3 5-3 8 0s5 3 8 0" fill="none" stroke="#c8d8d8" stroke-width="1.700"/></svg>
<svg class="abs" style="left:65px;top:401px" width="16" height="16" viewBox="0 0 16 16"><defs><linearGradient id="grt" x1="0" x2="1"><stop offset="0" stop-color="#a01010"/><stop offset=".4" stop-color="#f02020"/></linearGradient></defs><path d="M0 0l15.500 8L0 16z" fill="url(#grt)"/></svg>
<div class="abs" style="left:38px;top:307px;width:260px;height:117px;border:5px solid #e41c24;border-width:5px 5px 5px 5px"></div>
<div class="abs" style="left:6px;top:956px;width:291px;height:17px;background:#d4d0c8"></div>
<div class="abs" style="left:247px;top:956px;width:34px;height:17px;background:#fff;background-image:conic-gradient(#d4d0c8 25%,#fff 0 50%,#d4d0c8 0 75%,#fff 0);background-size:2px 2px"></div>
<div class="btn" style="left:6px;top:956px;width:16px;height:17px"><div class="abs" style="left:4px;top:4px;width:0;height:0;border:4px solid transparent;border-right-color:#000;border-left-width:0"></div></div>
<div class="btn" style="left:22px;top:956px;width:225px;height:17px"></div>
<div class="btn" style="left:281px;top:956px;width:16px;height:17px"><div class="abs" style="left:6px;top:4px;width:0;height:0;border:4px solid transparent;border-left-color:#000;border-right-width:0"></div></div>
<svg class="abs" style="left:304px;top:161px" width="1374" height="818" viewBox="304 161 1374 818">
<defs><linearGradient id="gh" x1="0" x2="1"><stop offset="0" stop-color="#647c9c"/><stop offset="1" stop-color="#8cacd4"/></linearGradient><linearGradient id="gl" x1="0" y1="0" x2="1" y2="1"><stop offset="0" stop-color="#7296be"/><stop offset="1" stop-color="#6a8eb4"/></linearGradient></defs>
<rect x="304" y="161" width="1375" height="818" fill="#000"/>
<polygon points="591.4,463 831.6,602.5 831.6,729.5 591.4,590" fill="#6e92ba"/>
<polygon points="831.6,602.5 963,526.3 963,653.3 831.6,729.5" fill="#56789c"/>
<polyline points="591.4,463 722.1,388.6 963,526.3" fill="none" stroke="#00006c" stroke-width="3.5"/>
<polygon points="722.1,388.6 963,526.3 831.6,602.5 591.4,463" fill="#a2c4f2"/>
<polyline points="591.4,590 831.6,729.5 963,653.3" fill="none" stroke="#c84848" stroke-width="1"/>
<path d="M963 526.3v127" stroke="#e07878" stroke-width="1.5"/>
<path d="M831.6 602.5v127" stroke="#e04848" stroke-width="1.2" stroke-dasharray="12 4"/>
<polyline points="591.4,464.5 831.6,604 963,527.8" fill="none" stroke="#0808d8" stroke-width="2.6"/>
<polyline points="592.4,463.8 831.6,602.8 962,527.1" fill="none" stroke="#b030c0" stroke-width=".8"/>
<ellipse cx="722.1" cy="412.4" rx="14.2" ry="8.2" fill="#d41c26"/><ellipse cx="722.1" cy="413.1" rx="10.1" ry="4.9" fill="url(#gh)"/>
<ellipse cx="700.1" cy="425.2" rx="14.2" ry="8.2" fill="#d41c26"/><ellipse cx="700.1" cy="425.9" rx="10.1" ry="4.9" fill="url(#gh)"/>
<ellipse cx="678.2" cy="438" rx="14.2" ry="8.2" fill="#d41c26"/><ellipse cx="678.2" cy="438.7" rx="10.1" ry="4.9" fill="url(#gh)"/>
<ellipse cx="656.2" cy="450.9" rx="14.2" ry="8.2" fill="#d41c26"/><ellipse cx="656.2" cy="451.6" rx="10.1" ry="4.9" fill="url(#gh)"/>
<ellipse cx="634.3" cy="463.7" rx="14.2" ry="8.2" fill="#d41c26"/><ellipse cx="634.3" cy="464.4" rx="10.1" ry="4.9" fill="url(#gh)"/>
<ellipse cx="744" cy="425.2" rx="14.2" ry="8.2" fill="#d41c26"/><ellipse cx="744" cy="425.9" rx="10.1" ry="4.9" fill="url(#gh)"/>
<ellipse cx="722.1" cy="438" rx="14.2" ry="8.2" fill="#d41c26"/><ellipse cx="722.1" cy="438.7" rx="10.1" ry="4.9" fill="url(#gh)"/>
<ellipse cx="700.1" cy="450.9" rx="14.2" ry="8.2" fill="#d41c26"/><ellipse cx="700.1" cy="451.6" rx="10.1" ry="4.9" fill="url(#gh)"/>
<ellipse cx="678.2" cy="463.7" rx="14.2" ry="8.2" fill="#d41c26"/><ellipse cx="678.2" cy="464.4" rx="10.1" ry="4.9" fill="url(#gh)"/>
<ellipse cx="656.2" cy="476.5" rx="14.2" ry="8.2" fill="#d41c26"/><ellipse cx="656.2" cy="477.2" rx="10.1" ry="4.9" fill="url(#gh)"/>
<ellipse cx="766" cy="438" rx="14.2" ry="8.2" fill="#d41c26"/><ellipse cx="766" cy="438.7" rx="10.1" ry="4.9" fill="url(#gh)"/>
<ellipse cx="744" cy="450.9" rx="14.2" ry="8.2" fill="#d41c26"/><ellipse cx="744" cy="451.6" rx="10.1" ry="4.9" fill="url(#gh)"/>
<ellipse cx="722.1" cy="463.7" rx="14.2" ry="8.2" fill="#d41c26"/><ellipse cx="722.1" cy="464.4" rx="10.1" ry="4.9" fill="url(#gh)"/>
<ellipse cx="700.1" cy="476.5" rx="14.2" ry="8.2" fill="#d41c26"/><ellipse cx="700.1" cy="477.2" rx="10.1" ry="4.9" fill="url(#gh)"/>
<ellipse cx="678.2" cy="489.4" rx="14.2" ry="8.2" fill="#d41c26"/><ellipse cx="678.2" cy="490.1" rx="10.1" ry="4.9" fill="url(#gh)"/>
<ellipse cx="787.9" cy="450.9" rx="14.2" ry="8.2" fill="#d41c26"/><ellipse cx="787.9" cy="451.6" rx="10.1" ry="4.9" fill="url(#gh)"/>
<ellipse cx="766" cy="463.7" rx="14.2" ry="8.2" fill="#d41c26"/><ellipse cx="766" cy="464.4" rx="10.1" ry="4.9" fill="url(#gh)"/>
<ellipse cx="744" cy="476.5" rx="14.2" ry="8.2" fill="#d41c26"/><ellipse cx="744" cy="477.2" rx="10.1" ry="4.9" fill="url(#gh)"/>
<ellipse cx="722.1" cy="489.4" rx="14.2" ry="8.2" fill="#d41c26"/><ellipse cx="722.1" cy="490.1" rx="10.1" ry="4.9" fill="url(#gh)"/>
<ellipse cx="700.1" cy="502.2" rx="14.2" ry="8.2" fill="#d41c26"/><ellipse cx="700.1" cy="502.9" rx="10.1" ry="4.9" fill="url(#gh)"/>
<ellipse cx="809.9" cy="463.7" rx="14.2" ry="8.2" fill="#d41c26"/><ellipse cx="809.9" cy="464.4" rx="10.1" ry="4.9" fill="url(#gh)"/>
<ellipse cx="787.9" cy="476.5" rx="14.2" ry="8.2" fill="#d41c26"/><ellipse cx="787.9" cy="477.2" rx="10.1" ry="4.9" fill="url(#gh)"/>
<ellipse cx="766" cy="489.4" rx="14.2" ry="8.2" fill="#d41c26"/><ellipse cx="766" cy="490.1" rx="10.1" ry="4.9" fill="url(#gh)"/>
<ellipse cx="744" cy="502.2" rx="14.2" ry="8.2" fill="#d41c26"/><ellipse cx="744" cy="502.9" rx="10.1" ry="4.9" fill="url(#gh)"/>
<ellipse cx="722.1" cy="515" rx="14.2" ry="8.2" fill="#d41c26"/><ellipse cx="722.1" cy="515.7" rx="10.1" ry="4.9" fill="url(#gh)"/>
<ellipse cx="831.8" cy="476.5" rx="14.2" ry="8.2" fill="#d41c26"/><ellipse cx="831.8" cy="477.2" rx="10.1" ry="4.9" fill="url(#gh)"/>
<ellipse cx="809.9" cy="489.4" rx="14.2" ry="8.2" fill="#d41c26"/><ellipse cx="809.9" cy="490.1" rx="10.1" ry="4.9" fill="url(#gh)"/>
<ellipse cx="787.9" cy="502.2" rx="14.2" ry="8.2" fill="#d41c26"/><ellipse cx="787.9" cy="502.9" rx="10.1" ry="4.9" fill="url(#gh)"/>
<ellipse cx="766" cy="515" rx="14.2" ry="8.2" fill="#d41c26"/><ellipse cx="766" cy="515.7" rx="10.1" ry="4.9" fill="url(#gh)"/>
<ellipse cx="744" cy="527.8" rx="14.2" ry="8.2" fill="#d41c26"/><ellipse cx="744" cy="528.5" rx="10.1" ry="4.9" fill="url(#gh)"/>
<ellipse cx="853.8" cy="489.4" rx="14.2" ry="8.2" fill="#d41c26"/><ellipse cx="853.8" cy="490.1" rx="10.1" ry="4.9" fill="url(#gh)"/>
<ellipse cx="831.8" cy="502.2" rx="14.2" ry="8.2" fill="#d41c26"/><ellipse cx="831.8" cy="502.9" rx="10.1" ry="4.9" fill="url(#gh)"/>
<ellipse cx="809.9" cy="515" rx="14.2" ry="8.2" fill="#d41c26"/><ellipse cx="809.9" cy="515.7" rx="10.1" ry="4.9" fill="url(#gh)"/>
<ellipse cx="787.9" cy="527.8" rx="14.2" ry="8.2" fill="#d41c26"/><ellipse cx="787.9" cy="528.5" rx="10.1" ry="4.9" fill="url(#gh)"/>
<ellipse cx="766" cy="540.7" rx="14.2" ry="8.2" fill="#d41c26"/><ellipse cx="766" cy="541.4" rx="10.1" ry="4.9" fill="url(#gh)"/>
<ellipse cx="875.8" cy="502.2" rx="14.2" ry="8.2" fill="#d41c26"/><ellipse cx="875.8" cy="502.9" rx="10.1" ry="4.9" fill="url(#gh)"/>
<ellipse cx="853.8" cy="515" rx="14.2" ry="8.2" fill="#d41c26"/><ellipse cx="853.8" cy="515.7" rx="10.1" ry="4.9" fill="url(#gh)"/>
<ellipse cx="831.8" cy="527.8" rx="14.2" ry="8.2" fill="#d41c26"/><ellipse cx="831.8" cy="528.5" rx="10.1" ry="4.9" fill="url(#gh)"/>
<ellipse cx="809.9" cy="540.7" rx="14.2" ry="8.2" fill="#d41c26"/><ellipse cx="809.9" cy="541.4" rx="10.1" ry="4.9" fill="url(#gh)"/>
<ellipse cx="787.9" cy="553.5" rx="14.2" ry="8.2" fill="#d41c26"/><ellipse cx="787.9" cy="554.2" rx="10.1" ry="4.9" fill="url(#gh)"/>
<ellipse cx="897.7" cy="515" rx="14.2" ry="8.2" fill="#d41c26"/><ellipse cx="897.7" cy="515.7" rx="10.1" ry="4.9" fill="url(#gh)"/>
<ellipse cx="875.8" cy="527.8" rx="14.2" ry="8.2" fill="#d41c26"/><ellipse cx="875.8" cy="528.5" rx="10.1" ry="4.9" fill="url(#gh)"/>
<ellipse cx="853.8" cy="540.7" rx="14.2" ry="8.2" fill="#d41c26"/><ellipse cx="853.8" cy="541.4" rx="10.1" ry="4.9" fill="url(#gh)"/>
<ellipse cx="831.8" cy="553.5" rx="14.2" ry="8.2" fill="#d41c26"/><ellipse cx="831.8" cy="554.2" rx="10.1" ry="4.9" fill="url(#gh)"/>
<ellipse cx="809.9" cy="566.3" rx="14.2" ry="8.2" fill="#d41c26"/><ellipse cx="809.9" cy="567" rx="10.1" ry="4.9" fill="url(#gh)"/>
<ellipse cx="919.6" cy="527.8" rx="14.2" ry="8.2" fill="#d41c26"/><ellipse cx="919.6" cy="528.5" rx="10.1" ry="4.9" fill="url(#gh)"/>
<ellipse cx="897.7" cy="540.7" rx="14.2" ry="8.2" fill="#d41c26"/><ellipse cx="897.7" cy="541.4" rx="10.1" ry="4.9" fill="url(#gh)"/>
<ellipse cx="875.8" cy="553.5" rx="14.2" ry="8.2" fill="#d41c26"/><ellipse cx="875.8" cy="554.2" rx="10.1" ry="4.9" fill="url(#gh)"/>
<ellipse cx="853.8" cy="566.3" rx="14.2" ry="8.2" fill="#d41c26"/><ellipse cx="853.8" cy="567" rx="10.1" ry="4.9" fill="url(#gh)"/>
<ellipse cx="831.8" cy="579.2" rx="14.2" ry="8.2" fill="#d41c26"/><ellipse cx="831.8" cy="579.9" rx="10.1" ry="4.9" fill="url(#gh)"/>
<path d="M634.5 210.4V462.9M656.5 197.6V450.1M678.5 184.7V437.2M700.5 171.9V424.4M722.5 159.1V411.6M656.5 223.2V475.7M678.5 210.4V462.9M700.5 197.6V450.1M722.5 184.7V437.2M744.5 171.9V424.4M678.5 236.1V488.6M700.5 223.2V475.7M722.5 210.4V462.9M744.5 197.6V450.1M766.5 184.7V437.2M700.5 248.9V501.4M722.5 236.1V488.6M744.5 223.2V475.7M766.5 210.4V462.9M787.5 197.6V450.1M722.5 261.7V514.2M744.5 248.9V501.4M766.5 236.1V488.6M787.5 223.2V475.7M809.5 210.4V462.9M744.5 274.5V527M766.5 261.7V514.2M787.5 248.9V501.4M809.5 236.1V488.6M831.5 223.2V475.7M766.5 287.4V539.9M787.5 274.5V527M809.5 261.7V514.2M831.5 248.9V501.4M853.5 236.1V488.6M787.5 300.2V552.7M809.5 287.4V539.9M831.5 274.5V527M853.5 261.7V514.2M875.5 248.9V501.4M809.5 313V565.5M831.5 300.2V552.7M853.5 287.4V539.9M875.5 274.5V527M897.5 261.7V514.2M831.5 325.9V578.4M853.5 313V565.5M875.5 300.2V552.7M897.5 287.4V539.9M919.5 274.5V527M722.1 159.1 L700.1 171.9 L678.2 184.7 L656.2 197.6 L634.3 210.4 L656.2 223.2 L678.2 210.4 L700.1 197.6 L722.1 184.7 L744 171.9 L766 184.7 L744 197.6 L722.1 210.4 L700.1 223.2 L678.2 236.1 L700.1 248.9 L722.1 236.1 L744 223.2 L766 210.4 L787.9 197.6 L809.9 210.4 L787.9 223.2 L766 236.1 L744 248.9 L722.1 261.7 L744 274.5 L766 261.7 L787.9 248.9 L809.9 236.1 L831.8 223.2 L853.8 236.1 L831.8 248.9 L809.9 261.7 L787.9 274.5 L766 287.4 L787.9 300.2 L809.9 287.4 L831.8 274.5 L853.8 261.7 L875.8 248.9 L897.7 261.7 L875.8 274.5 L853.8 287.4 L831.8 300.2 L809.9 313 L831.8 325.9 L853.8 313 L875.8 300.2 L897.7 287.4 L919.6 274.5" fill="none" stroke="#f0f0a8" stroke-width="1"/>
<path d="M634.5 463.4v5M656.5 450.6v5M678.5 437.7v5M700.5 424.9v5M722.5 412.1v5M656.5 476.2v5M678.5 463.4v5M700.5 450.6v5M722.5 437.7v5M744.5 424.9v5M678.5 489.1v5M700.5 476.2v5M722.5 463.4v5M744.5 450.6v5M766.5 437.7v5M700.5 501.9v5M722.5 489.1v5M744.5 476.2v5M766.5 463.4v5M787.5 450.6v5M722.5 514.7v5M744.5 501.9v5M766.5 489.1v5M787.5 476.2v5M809.5 463.4v5M744.5 527.5v5M766.5 514.7v5M787.5 501.9v5M809.5 489.1v5M831.5 476.2v5M766.5 540.4v5M787.5 527.5v5M809.5 514.7v5M831.5 501.9v5M853.5 489.1v5M787.5 553.2v5M809.5 540.4v5M831.5 527.5v5M853.5 514.7v5M875.5 501.9v5M809.5 566v5M831.5 553.2v5M853.5 540.4v5M875.5 527.5v5M897.5 514.7v5M831.5 578.9v5M853.5 566v5M875.5 553.2v5M897.5 540.4v5M919.5 527.5v5" stroke="#48c8e8" stroke-width="1"/>
<polyline points="658.9,333.6 697.7,355.7 700.1,375.5 722.1,388.6" fill="none" stroke="#46e246" stroke-width="1.3" stroke-linejoin="round"/>
<polygon points="722.1,388.6 711.3,385.2 714,380.7" fill="#46e246"/>
<text transform="matrix(0.97 0.56 -1.242 1.08 675.7 341.9)" font-family="Liberation Sans,sans-serif" font-size="10.5" text-anchor="middle" fill="none" stroke="#46e246" stroke-width=".85">0.000</text>
<path d="M703.1 400.6L683 388.3C678.6 385.8 680.3 375.3 676 372.8L633.1 348.1" fill="none" stroke="#46e246" stroke-width="1.3"/>
<polyline points="703.1,400.6 722.1,411.6" fill="none" stroke="#84c8a4" stroke-width="0.7" stroke-linejoin="round"/>
<polygon points="721.1,411.1 712.6,408.7 714.9,404.9" fill="#46e246"/>
<text transform="matrix(0.97 0.56 -1.242 1.08 653.4 358.6)" font-family="Liberation Sans,sans-serif" font-size="10.5" text-anchor="middle" fill="none" stroke="#46e246" stroke-width=".85">10.000</text>
<path d="M681.1 413.4L661 401.2C656.7 398.7 658.3 388.2 654 385.7L611.1 360.9" fill="none" stroke="#46e246" stroke-width="1.3"/>
<polyline points="681.1,413.4 700.1,424.4" fill="none" stroke="#84c8a4" stroke-width="0.7" stroke-linejoin="round"/>
<polygon points="699.1,423.9 690.7,421.5 692.9,417.7" fill="#46e246"/>
<text transform="matrix(0.97 0.56 -1.242 1.08 631.5 371.4)" font-family="Liberation Sans,sans-serif" font-size="10.5" text-anchor="middle" fill="none" stroke="#46e246" stroke-width=".85">20.000</text>
<path d="M659.2 426.2L639.1 414C634.7 411.5 636.4 401 632.1 398.5L589.2 373.7" fill="none" stroke="#46e246" stroke-width="1.3"/>
<polyline points="659.2,426.2 678.2,437.2" fill="none" stroke="#84c8a4" stroke-width="0.7" stroke-linejoin="round"/>
<polygon points="677.2,436.7 668.7,434.4 671,430.6" fill="#46e246"/>
<text transform="matrix(0.97 0.56 -1.242 1.08 609.5 384.3)" font-family="Liberation Sans,sans-serif" font-size="10.5" text-anchor="middle" fill="none" stroke="#46e246" stroke-width=".85">30.000</text>
<path d="M637.2 439.1L617.1 426.8C612.8 424.3 614.4 413.8 610.1 411.3L567.2 386.6" fill="none" stroke="#46e246" stroke-width="1.3"/>
<polyline points="637.2,439.1 656.2,450.1" fill="none" stroke="#84c8a4" stroke-width="0.7" stroke-linejoin="round"/>
<polygon points="655.2,449.6 646.8,447.2 649,443.4" fill="#46e246"/>
<text transform="matrix(0.97 0.56 -1.242 1.08 587.6 397.1)" font-family="Liberation Sans,sans-serif" font-size="10.5" text-anchor="middle" fill="none" stroke="#46e246" stroke-width=".85">40.000</text>
<path d="M615.3 451.9L595.2 439.6C590.8 437.1 592.5 426.6 588.2 424.1L545.3 399.4" fill="none" stroke="#46e246" stroke-width="1.3"/>
<polyline points="615.3,451.9 634.3,462.9" fill="none" stroke="#84c8a4" stroke-width="0.7" stroke-linejoin="round"/>
<polygon points="633.3,462.4 624.8,460 627.1,456.2" fill="#46e246"/>
<text transform="matrix(0.97 0.56 -1.242 1.08 565.6 409.9)" font-family="Liberation Sans,sans-serif" font-size="10.5" text-anchor="middle" fill="none" stroke="#46e246" stroke-width=".85">50.000</text>
<polyline points="778.8,335 739.4,357.7 740.7,376.6 723.6,387.6" fill="none" stroke="#46e246" stroke-width="1.3" stroke-linejoin="round"/>
<polygon points="723.6,387.6 731.4,379.5 734.3,383.8" fill="#46e246"/>
<text transform="matrix(0.97 -0.56 1.242 1.08 761.7 343.6)" font-family="Liberation Sans,sans-serif" font-size="10.5" text-anchor="middle" fill="none" stroke="#46e246" stroke-width=".85">0.000</text>
<path d="M744.1 398.8L764.4 386.7C769.6 383.7 773.7 372.2 778.9 369.2L815.7 348" fill="none" stroke="#46e246" stroke-width="1.3"/>
<polyline points="744.1,398.8 722.1,411.6" fill="none" stroke="#84c8a4" stroke-width="0.7" stroke-linejoin="round"/>
<polygon points="723.1,411.1 729.3,404.9 731.6,408.7" fill="#46e246"/>
<text transform="matrix(0.97 -0.56 1.242 1.08 795.4 358.5)" font-family="Liberation Sans,sans-serif" font-size="10.5" text-anchor="middle" fill="none" stroke="#46e246" stroke-width=".85">10.000</text>
<path d="M766 411.6L786.3 399.6C791.5 396.6 795.6 385.1 800.8 382.1L837.6 360.8" fill="none" stroke="#46e246" stroke-width="1.3"/>
<polyline points="766,411.6 744,424.4" fill="none" stroke="#84c8a4" stroke-width="0.7" stroke-linejoin="round"/>
<polygon points="745,423.9 751.3,417.7 753.5,421.5" fill="#46e246"/>
<text transform="matrix(0.97 -0.56 1.242 1.08 817.3 371.3)" font-family="Liberation Sans,sans-serif" font-size="10.5" text-anchor="middle" fill="none" stroke="#46e246" stroke-width=".85">20.000</text>
<path d="M788 424.4L808.3 412.4C813.5 409.4 817.6 397.9 822.8 394.9L859.6 373.6" fill="none" stroke="#46e246" stroke-width="1.3"/>
<polyline points="788,424.4 766,437.2" fill="none" stroke="#84c8a4" stroke-width="0.7" stroke-linejoin="round"/>
<polygon points="767,436.7 773.2,430.6 775.5,434.4" fill="#46e246"/>
<text transform="matrix(0.97 -0.56 1.242 1.08 839.3 384.2)" font-family="Liberation Sans,sans-serif" font-size="10.5" text-anchor="middle" fill="none" stroke="#46e246" stroke-width=".85">30.000</text>
<path d="M809.9 437.3L830.2 425.2C835.4 422.2 839.5 410.7 844.7 407.7L881.5 386.5" fill="none" stroke="#46e246" stroke-width="1.3"/>
<polyline points="809.9,437.3 787.9,450.1" fill="none" stroke="#84c8a4" stroke-width="0.7" stroke-linejoin="round"/>
<polygon points="788.9,449.6 795.2,443.4 797.4,447.2" fill="#46e246"/>
<text transform="matrix(0.97 -0.56 1.242 1.08 861.2 397)" font-family="Liberation Sans,sans-serif" font-size="10.5" text-anchor="middle" fill="none" stroke="#46e246" stroke-width=".85">40.000</text>
<path d="M831.9 450.1L852.2 438C857.4 435 861.5 423.5 866.7 420.5L903.5 399.3" fill="none" stroke="#46e246" stroke-width="1.3"/>
<polyline points="831.9,450.1 809.9,462.9" fill="none" stroke="#84c8a4" stroke-width="0.7" stroke-linejoin="round"/>
<polygon points="810.9,462.4 817.1,456.2 819.4,460" fill="#46e246"/>
<text transform="matrix(0.97 -0.56 1.242 1.08 883.2 409.8)" font-family="Liberation Sans,sans-serif" font-size="10.5" text-anchor="middle" fill="none" stroke="#46e246" stroke-width=".85">50.000</text>
<path d="M853.8 462.9L874.1 450.9C879.3 447.9 883.4 436.4 888.6 433.4L925.4 412.1" fill="none" stroke="#46e246" stroke-width="1.3"/>
<polyline points="853.8,462.9 831.8,475.7" fill="none" stroke="#84c8a4" stroke-width="0.7" stroke-linejoin="round"/>
<polygon points="832.8,475.2 839.1,469.1 841.3,472.9" fill="#46e246"/>
<text transform="matrix(0.97 -0.56 1.242 1.08 905.1 422.7)" font-family="Liberation Sans,sans-serif" font-size="10.5" text-anchor="middle" fill="none" stroke="#46e246" stroke-width=".85">60.000</text>
<path d="M875.8 475.8L896.1 463.7C901.3 460.7 905.4 449.2 910.6 446.2L947.4 425" fill="none" stroke="#46e246" stroke-width="1.3"/>
<polyline points="875.8,475.8 853.8,488.6" fill="none" stroke="#84c8a4" stroke-width="0.7" stroke-linejoin="round"/>
<polygon points="854.8,488.1 861,481.9 863.3,485.7" fill="#46e246"/>
<text transform="matrix(0.97 -0.56 1.242 1.08 927.1 435.5)" font-family="Liberation Sans,sans-serif" font-size="10.5" text-anchor="middle" fill="none" stroke="#46e246" stroke-width=".85">70.000</text>
<path d="M897.8 488.6L918 476.5C923.2 473.5 927.3 462 932.5 459L969.4 437.8" fill="none" stroke="#46e246" stroke-width="1.3"/>
<polyline points="897.8,488.6 875.8,501.4" fill="none" stroke="#84c8a4" stroke-width="0.7" stroke-linejoin="round"/>
<polygon points="876.8,500.9 883,494.7 885.2,498.5" fill="#46e246"/>
<text transform="matrix(0.97 -0.56 1.242 1.08 949 448.3)" font-family="Liberation Sans,sans-serif" font-size="10.5" text-anchor="middle" fill="none" stroke="#46e246" stroke-width=".85">80.000</text>
<path d="M919.7 501.4L940 489.4C945.2 486.4 949.3 474.9 954.5 471.9L991.3 450.6" fill="none" stroke="#46e246" stroke-width="1.3"/>
<polyline points="919.7,501.4 897.7,514.2" fill="none" stroke="#84c8a4" stroke-width="0.7" stroke-linejoin="round"/>
<polygon points="898.7,513.7 904.9,507.5 907.2,511.3" fill="#46e246"/>
<text transform="matrix(0.97 -0.56 1.242 1.08 971 461.1)" font-family="Liberation Sans,sans-serif" font-size="10.5" text-anchor="middle" fill="none" stroke="#46e246" stroke-width=".85">90.000</text>
<path d="M941.6 514.2L956.1 505.6C961.3 502.6 965.4 491.1 970.6 488.1L1013.2 463.4" fill="none" stroke="#46e246" stroke-width="1.3"/>
<polyline points="941.6,514.2 919.6,527" fill="none" stroke="#84c8a4" stroke-width="0.7" stroke-linejoin="round"/>
<polygon points="920.6,526.5 926.9,520.4 929.1,524.2" fill="#46e246"/>
<text transform="matrix(0.97 -0.56 1.242 1.08 990 475.7)" font-family="Liberation Sans,sans-serif" font-size="10.5" text-anchor="middle" fill="none" stroke="#46e246" stroke-width=".85">100.000</text>
<polyline points="961.4,522.9 992.9,503.6" fill="none" stroke="#1c1ce4" stroke-width="1.5" stroke-linejoin="round"/>
<text transform="matrix(.75 -.433 0 1 982.9 503.4)" font-family="Liberation Sans,sans-serif" font-size="14" font-style="italic" text-anchor="middle" fill="none" stroke="#1c1ce4" stroke-width="1">10.0</text>
<polyline points="964.3,538.6 992.9,522" fill="none" stroke="#1c1ce4" stroke-width="1.5" stroke-linejoin="round"/>
<text transform="matrix(.75 -.433 0 1 982.9 521.8)" font-family="Liberation Sans,sans-serif" font-size="14" font-style="italic" text-anchor="middle" fill="none" stroke="#1c1ce4" stroke-width="1">15.0</text>
<polyline points="963.6,562.9 996.4,544.3" fill="none" stroke="#1c1ce4" stroke-width="1.5" stroke-linejoin="round"/>
<text transform="matrix(.75 -.433 0 1 986.4 544.1)" font-family="Liberation Sans,sans-serif" font-size="14" font-style="italic" text-anchor="middle" fill="none" stroke="#1c1ce4" stroke-width="1">20.0</text>
<polyline points="963.6,582.9 997.9,563.6" fill="none" stroke="#1c1ce4" stroke-width="1.5" stroke-linejoin="round"/>
<text transform="matrix(.75 -.433 0 1 987.9 563.4)" font-family="Liberation Sans,sans-serif" font-size="14" font-style="italic" text-anchor="middle" fill="none" stroke="#1c1ce4" stroke-width="1">25.0</text>
<polyline points="963.6,602.9 1000,584.3" fill="none" stroke="#1c1ce4" stroke-width="1.5" stroke-linejoin="round"/>
<text transform="matrix(.75 -.433 0 1 990 584.1)" font-family="Liberation Sans,sans-serif" font-size="14" font-style="italic" text-anchor="middle" fill="none" stroke="#1c1ce4" stroke-width="1">30.0</text>
<polyline points="733.5,620.6 759.7,604.3 776,609.8 806,593.2" fill="none" stroke="#1c1ce4" stroke-width="1.5" stroke-linejoin="round"/>
<polygon points="809,591.5 800.6,599.1 798.1,594.6" fill="#1c1ce4"/>
<text transform="matrix(.78 -.45 0 1 744 609)" font-family="Liberation Sans,sans-serif" font-size="15" font-style="italic" text-anchor="middle" fill="none" stroke="#1c1ce4" stroke-width=".9">0.0</text>
<path d="M345.5 938.5V924" stroke="#2020d0" stroke-width="1.2"/><path d="M345.5 938.5L358.300 932" stroke="#208020" stroke-width="1"/><path d="M345.5 938.5L358.300 946.400" stroke="#e02020" stroke-width="1"/>
<g font-family="Liberation Serif,serif" font-weight="bold" font-size="12"><text x="341.5" y="918" fill="#2020d0">Z</text><text x="361.5" y="930" fill="#208828">Y</text><text x="362" y="953.5" fill="#e02020">X</text></g>
<g font-family="Liberation Serif,serif" font-weight="bold" font-size="12" fill="#e4e4e4"><text x="312" y="968" id="gv1" textLength="59" lengthAdjust="spacingAndGlyphs">Gview:ISO</text><text x="385.5" y="968" id="gv2" textLength="53.5" lengthAdjust="spacingAndGlyphs">WCS:TOP</text><text x="453" y="968" id="gv3" textLength="77" lengthAdjust="spacingAndGlyphs">T/Cplane:TOP</text></g>
<path d="M1558.5 943v24M1654.5 944v23M1558.5 955.5h96" stroke="#e8e8a8" stroke-width="1.2" fill="none"/>
<g font-family="Liberation Serif,serif" font-weight="bold" font-size="12.5" text-anchor="middle"><text x="1604" y="951" fill="#c8a0f0" letter-spacing=".5">31.014</text><text x="1600" y="967" fill="#e8e8e8" letter-spacing=".3">Metric</text></g>
</svg>
<div class="abs" style="left:0;top:979px;width:1680px;height:1px;background:#fff"></div>
<div class="abs" style="left:1679px;top:161px;width:1px;height:818px;background:#fff"></div>
<div class="abs" style="left:944px;top:983px;width:26px;height:23px;border:1px solid;border-color:#fff #808080 #808080 #fff"><span class="t" style="left:5px;top:4px;font-size:12px;">3D</span></div>
<div class="abs" style="left:972px;top:983px;width:60px;height:23px;border:1px solid;border-color:#fff #808080 #808080 #fff"><span class="t" style="left:8px;top:4px;font-size:12px;">螢幕視角</span></div>
<div class="abs" style="left:1034px;top:983px;width:30px;height:23px;border:1px solid;border-color:#fff #808080 #808080 #fff"><span class="t" style="left:3px;top:4px;font-size:12px;">平面</span></div>
<div class="abs" style="left:1066px;top:983px;width:98px;height:23px;border:1px solid;border-color:#fff #808080 #808080 #fff"><span class="t" style="left:8px;top:3px;font-size:12px;">Z:</span></div>
<div class="sunk" style="left:1087px;top:985px;width:74px;height:19px;background:#fcc8fc"><span class="t" style="left:3px;top:2px;font-size:12px;background:#0a246a;color:#fff;padding:1px 0 1px 0;letter-spacing:-.3px">100.0</span><div class="btn" style="right:2px;top:2px;width:16px;height:15px"><div class="dd" style="left:3px;top:5px;border-width:4px 4px 0 4px"></div></div></div>
<div class="abs" style="left:1165px;top:983px;width:54px;height:23px;border:1px solid;border-color:#fff #808080 #808080 #fff"><div class="abs" style="left:2px;top:1px;width:34px;height:19px;background:#c8a0f8"></div><span class="t" style="left:11px;top:3px;font-size:12px;">95</span><div class="dd" style="left:40px;top:7px;border-width:7px 4.5px 0 4.5px"></div></div>
<div class="abs" style="left:1221px;top:983px;width:107px;height:23px;border:1px solid;border-color:#fff #808080 #808080 #fff"><span class="t" style="left:8px;top:3px;font-size:12px;">Level:</span></div>
<div class="sunk" style="left:1262px;top:985px;width:64px;height:19px;background:#fff"><span class="t" style="left:3px;top:3px;font-size:12px;">1</span><div class="btn" style="right:2px;top:2px;width:16px;height:15px"><div class="dd" style="left:3px;top:5px;border-width:4px 4px 0 4px"></div></div></div>
<div class="abs" style="left:1329px;top:983px;width:38px;height:23px;border:1px solid;border-color:#fff #808080 #808080 #fff"><span class="t" style="left:6px;top:4px;font-size:12px;">屬性</span></div>
<div class="sunk" style="left:1370px;top:985px;width:37px;height:22px;background:#fff"><span class="t" style="left:5px;top:6px;font-size:15px;">*</span><div class="btn" style="right:2px;top:2px;width:16px;height:18px"><div class="dd" style="left:3px;top:5px;border-width:4px 4px 0 4px"></div></div></div>
<div class="sunk" style="left:1411px;top:985px;width:70px;height:22px;background:#fff"><div class="abs" style="left:3px;top:7px;width:47px;height:3px;background:#000"></div><div class="btn" style="right:2px;top:2px;width:16px;height:18px"><div class="dd" style="left:3px;top:5px;border-width:4px 4px 0 4px"></div></div></div>
<div class="sunk" style="left:1485px;top:985px;width:73px;height:22px;background:#fff"><div class="abs" style="left:3px;top:7px;width:50px;height:2px;background:#000"></div><div class="btn" style="right:2px;top:2px;width:16px;height:18px"><div class="dd" style="left:3px;top:5px;border-width:4px 4px 0 4px"></div></div></div>
<div class="abs" style="left:1562px;top:983px;width:43px;height:23px;border:1px solid;border-color:#fff #808080 #808080 #fff"><span class="t" style="left:9px;top:4px;font-size:12px;">WCS</span></div>
<div class="abs" style="left:1607px;top:983px;width:42px;height:23px;border:1px solid;border-color:#fff #808080 #808080 #fff"><span class="t" style="left:8px;top:4px;font-size:12px;">群組</span></div>
<div class="abs" style="left:1651px;top:983px;width:16px;height:23px;border:1px solid;border-color:#fff #808080 #808080 #fff"><span class="t" style="left:5px;top:4px;font-size:12px;">!</span></div>
<div class="abs" style="left:1669px;top:983px;width:16px;height:23px;border:1px solid;border-color:#fff #808080 #808080 #fff"><span class="t" style="left:4px;top:4px;font-size:12px;">?</span></div>
<div class="abs" style="left:0;top:1007px;width:1680px;height:1px;background:#fff"></div>
<div class="btn" style="left:2px;top:1010px;width:47px;height:37px;"><svg class="abs" style="left:3px;top:10px" width="17" height="16" viewBox="0 0 17 16"><path d="M2 3c2-1.5 4-1.5 6 0l-1.5 5c-2-1.5-4-1.5-6 0z" fill="#e85020"/><path d="M9 3.5c2 1.5 4 1.5 6 0l-1.5 5c-2 1.5-4 1.5-6 0z" fill="#58b030"/><path d="M0 9c2-1.5 4-1.5 6 0l-1.5 5c-2-1.5-4-1.5-6 0z" fill="#3880e0"/><path d="M7 9.5c2 1.5 4 1.5 6 0l-1.5 5c-2 1.5-4 1.5-6 0z" fill="#f0c020"/></svg><span class="t" style="left:20px;top:12px;font-size:12px">開始</span></div>
<svg class="abs" style="left:67px;top:1012px" width="32" height="32" viewBox="0 0 32 32"><defs><radialGradient id="gie" cx=".4" cy=".35" r=".7"><stop offset="0" stop-color="#9cd8ff"/><stop offset=".6" stop-color="#2c80d0"/><stop offset="1" stop-color="#1c4c98"/></radialGradient></defs><text x="3" y="29" font-family="Liberation Sans,sans-serif" font-weight="bold" font-style="italic" font-size="42" fill="url(#gie)" stroke="#1c4c98" stroke-width=".6">e</text><path d="M3 27C-3 18 14 3 28 2c4 0 4 3 2 7" fill="none" stroke="#f0c030" stroke-width="2.600"/><path d="M3 27c2 3 9 0 13-4" fill="none" stroke="#f0c030" stroke-width="2.600"/></svg>
<div class="btn" style="left:108px;top:1010px;width:48px;height:37px;"><svg class="abs" style="left:7px;top:3px" width="34" height="32" viewBox="0 0 34 32"><path d="M2 6h9l2 3h19v18H2z" fill="#e8c860" stroke="#b89838"/><path d="M5 3h9l2 3h15v4H5z" fill="#f4e4a0" stroke="#c8a848"/><rect x="7" y="4" width="3" height="2" fill="#40a040"/><rect x="18" y="7" width="3" height="2" fill="#d04020"/><path d="M2 12h30v15H2z" fill="#f8e088" stroke="#c0a040"/><path d="M7 30v-9c0-2 1-3 3-3h14c2 0 3 1 3 3v9h-5v-6H12v6z" fill="#78b8e8" stroke="#3878b8"/></svg></div>
<svg class="abs" style="left:166px;top:1015px" width="30" height="28" viewBox="0 0 30 28"><rect x="6" y="2" width="20" height="22" fill="#b8d8f0" stroke="#6898c8"/><rect x="3" y="3" width="20" height="22" fill="#88b8e8" stroke="#4880b8"/><circle cx="12" cy="14" r="8.5" fill="#f08020" stroke="#fff" stroke-width="1.5"/><path d="M9.5 9.5l7 4.5-7 4.5z" fill="#fff"/></svg>
<div class="btn" style="left:208px;top:1010px;width:48px;height:37px;border-color:#404040 #fff #fff #404040;box-shadow:inset 1px 1px 0 #808080;background:#fff"><svg class="abs" style="left:5px;top:2px" width="38" height="32" viewBox="0 0 38 32"><path d="M2 3h9l5 9 7-9h8L19 17l9 13h-9l-5-8-6 8H1l10-13z" fill="#303030" stroke="#000" stroke-width=".6"/><path d="M11 3l17 27h-4L7 3z" fill="#e0e0e0"/><text x="27" y="15" font-family="Liberation Sans,sans-serif" font-weight="bold" font-size="14" fill="#d0d0d0" stroke="#404040" stroke-width=".8">4</text></svg></div>
<div class="btn" style="left:258px;top:1010px;width:48px;height:37px;"><svg class="abs" style="left:7px;top:2px" width="32" height="32" viewBox="0 0 32 32"><rect x="1" y="1" width="30" height="30" fill="#b00000" stroke="#800000" stroke-dasharray="2 1"/><text x="5" y="25" font-family="Liberation Sans,sans-serif" font-weight="bold" font-style="italic" font-size="24" fill="#fff">Fz</text></svg></div>
<div class="btn" style="left:308px;top:1010px;width:48px;height:37px;"><svg class="abs" style="left:8px;top:2px" width="32" height="32" viewBox="0 0 32 32"><defs><radialGradient id="gie" cx=".4" cy=".35" r=".7"><stop offset="0" stop-color="#9cd8ff"/><stop offset=".6" stop-color="#2c80d0"/><stop offset="1" stop-color="#1c4c98"/></radialGradient></defs><text x="3" y="29" font-family="Liberation Sans,sans-serif" font-weight="bold" font-style="italic" font-size="42" fill="url(#gie)" stroke="#1c4c98" stroke-width=".6">e</text><path d="M3 27C-3 18 14 3 28 2c4 0 4 3 2 7" fill="none" stroke="#f0c030" stroke-width="2.600"/><path d="M3 27c2 3 9 0 13-4" fill="none" stroke="#f0c030" stroke-width="2.600"/></svg></div>
<div class="grip" style="left:357px;top:1011px;height:35px;width:3px"></div>
<span class="t" style="left:1256px;top:1019px;font-size:13px">CH</span>
<div class="sep" style="left:1277px;top:1016px;height:22px"></div>
<div class="sep" style="left:1372px;top:1016px;height:22px"></div>
<div class="sep" style="left:1399px;top:1016px;height:22px"></div>
<div class="abs" style="left:1285px;top:1019px;width:17px;height:16px;border:1.5px solid #182888;border-radius:3px;background:#d8e0f8"><span class="t sans" style="left:1px;top:0;font-size:12px;color:#1c2ca0;font-weight:bold">ㄅ</span></div>
<span class="t sans" style="left:1307px;top:1019px;font-size:15px;font-weight:bold">中</span>
<div class="abs" style="left:1329px;top:1020px;width:16px;height:14px;background:linear-gradient(90deg,#808080 50%,#fff 50%);border:1px solid #606060"></div>
<svg class="abs" style="left:1350px;top:1019px" width="20" height="18" viewBox="0 0 20 18"><rect x="1" y="1" width="12" height="13" fill="#fff" stroke="#202040"/><path d="M1 2.5h12M3 6h8M3 8.5h8M3 11h8" stroke="#202040" stroke-width="1.200"/><path d="M11 6l7 6-3 .3 1.5 3-1.5.7-1.5-3-2.5 2z" fill="#fff" stroke="#000" stroke-width=".9"/></svg>
<svg class="abs" style="left:1377px;top:1017px" width="20" height="20" viewBox="0 0 20 20"><defs><radialGradient id="ghp" cx=".4" cy=".3" r=".8"><stop offset="0" stop-color="#5068e0"/><stop offset="1" stop-color="#101c80"/></radialGradient></defs><circle cx="10" cy="10" r="9" fill="url(#ghp)" stroke="#8090c0"/><text x="6" y="15" font-family="Liberation Sans,sans-serif" font-weight="bold" font-size="14" fill="#fff">?</text></svg>
<div class="abs" style="left:1407px;top:1016px;width:6px;height:5px;border:1px solid #000;border-top-width:2px"></div><div class="abs" style="left:1405px;top:1019px;width:6px;height:5px;border:1px solid #000;border-top-width:2px;background:#d4d0c8"></div><div class="dd" style="left:1406px;top:1031px"></div>
<div class="abs" style="left:1418px;top:1010px;width:260px;height:38px;border:1px solid;border-color:#808080 #fff #fff #808080"></div>
<svg class="abs" style="left:1422px;top:1016px" width="170" height="24" viewBox="0 0 170 24"><g><rect x="3" y="8" width="8" height="8" fill="#58a838"/><rect x="8" y="3" width="9" height="9" fill="#e05030"/><rect x="10" y="11" width="9" height="9" fill="#3880d0"/><rect x="2" y="14" width="7" height="7" fill="#58a838" opacity=".8"/></g><path d="M28 4l9 14M37 4l-9 14" stroke="#303030" stroke-width="1.800"/><rect x="35" y="13" width="8" height="7" fill="#b8b0e0"/><circle cx="59" cy="12" r="10" fill="#1020c8"/><path d="M55 7v7c0 2 1 3 4 3s4-1 4-3V7" fill="none" stroke="#fff" stroke-width="2"/><path d="M74 12l10-4h10l-8 5v6H74z" fill="#b0b0b0" stroke="#808080"/><circle cx="91" cy="10" r="3" fill="#40b040"/><path d="M101 6h10v14h-10z" fill="#a0a0a0" stroke="#505050"/><path d="M98 4v8h6V4M100 2v4M103 2v4" stroke="#404040" stroke-width="1.300" fill="#e0e0e0"/><path d="M124 9h4l5-5v16l-5-5h-4z" fill="#c8c8c8" stroke="#606060"/><path d="M136 7c2 3 2 7 0 10M139 4c4 5 4 11 0 16" fill="none" stroke="#606060" stroke-width="1.300"/><path d="M149 4v18" stroke="#505050" stroke-width="1.5"/><path d="M150 4c4-2 6 2 10 0v9c-4 2-6-2-10 0z" fill="#f0f0f0" stroke="#606060"/></svg>
<span class="t sans" id="clock" style="left:1599px;top:1014px;font-size:12.5px;letter-spacing:-.6px">下午 03:48</span>
<div class="abs" style="left:1661px;top:1023px;width:14px;height:12px;background:linear-gradient(#3068c0,#4888d8);border-bottom:2px solid #182848;box-shadow:0 0 2px #a0c8f0"></div>
<span class="t" id="wm" style="left:1460px;top:1029px;font-size:14.5px;font-weight:bold;font-family:'Liberation Sans','Noto Sans CJK SC',sans-serif;color:#fff0f0;-webkit-text-stroke:.9px #e83030;letter-spacing:.2px;transform:scaleX(1.22);transform-origin:0 0;text-shadow:0 0 1px #fff,1px 0 0 #fff,-1px 0 0 #fff,0 1px 0 #fff,0 -1px 0 #fff,1px 1px 0 #fff,-1px -1px 0 #fff,1px -1px 0 #fff,-1px 1px 0 #fff">三维网www.3dportal.cn</span>
</body>
</html>
